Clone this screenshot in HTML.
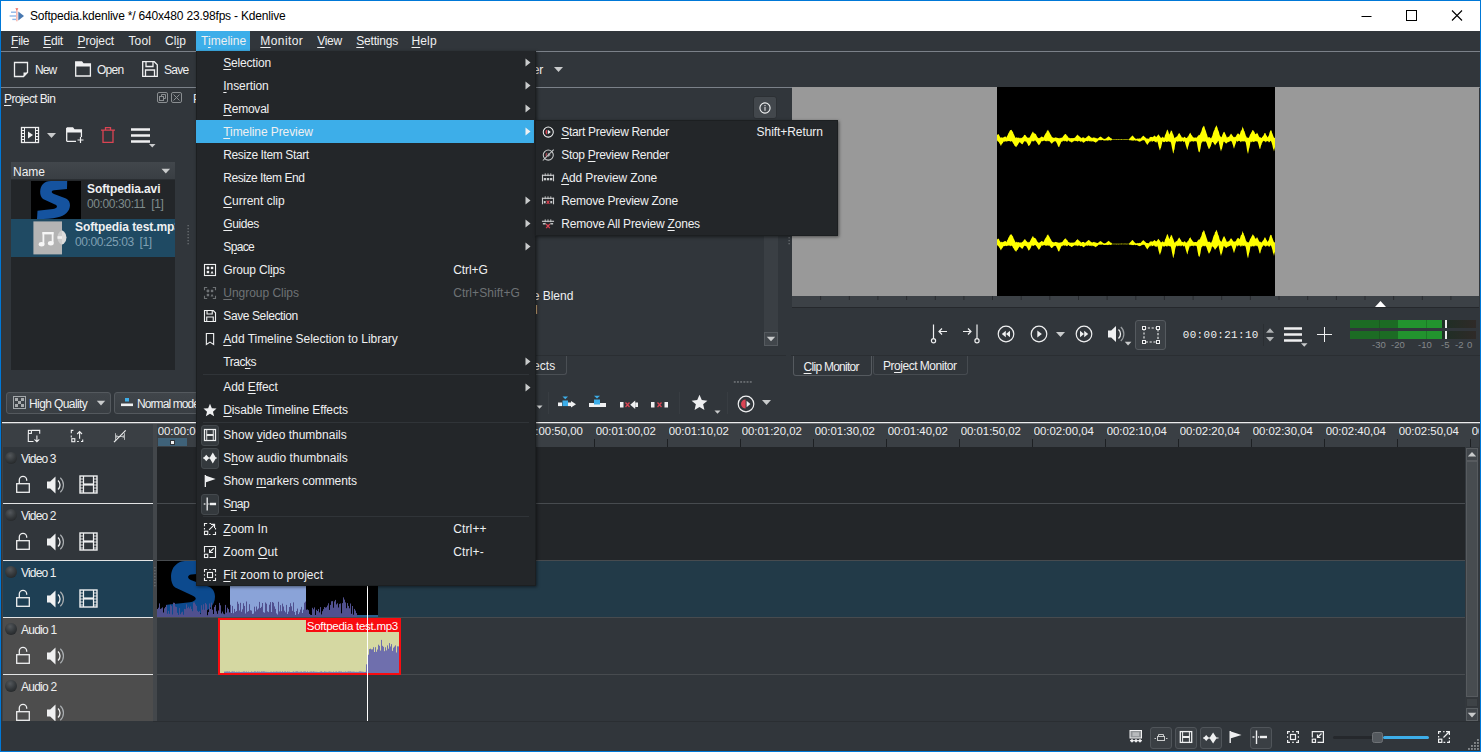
<!DOCTYPE html>
<html><head><meta charset="utf-8"><title>Kdenlive</title>
<style>
html,body{margin:0;padding:0;background:#31363b;overflow:hidden}
#w{position:relative;width:1481px;height:752px;overflow:hidden;background:#31363b;font-family:"Liberation Sans",sans-serif;font-size:12px;color:#eff0f1}
#w div,#w span,#w svg{position:absolute;box-sizing:border-box}
#w span{white-space:pre;line-height:1}
#w u{text-decoration:underline;text-underline-offset:1.5px;text-decoration-thickness:1px}
#w span.m{font-family:"Liberation Mono",monospace}
#w span.b{font-weight:bold}
</style></head><body><div id="w">
<div style="left:0px;top:0px;width:1481px;height:752px;background:#0078d7;"></div>
<div style="left:1px;top:1px;width:1479px;height:30px;background:#ffffff;"></div>
<div style="left:1px;top:31px;width:1479px;height:720px;background:#31363b;"></div>
<svg style="left:8px;top:7px;" width="18" height="18" viewBox="0 0 18 18"><path d="M10.300 4.500 L16 8.900 L10.300 13.400Z" fill="#4878b0"/>
<rect x="8.100" y="2" width="1.500" height="12.300" fill="#f7b5ad"/>
<path d="M7.300 1.200h3.100l-1.550 2.200z" fill="#ee6a5c"/>
<rect x="3" y="4.500" width="5" height="1.400" fill="#8fb7e8"/><rect x="1.600" y="8.300" width="6.400" height="1.400" fill="#8fb7e8"/><rect x="4.300" y="11.700" width="3.700" height="1.400" fill="#8fb7e8"/></svg>
<span style="left:30px;top:10.34px;font-size:12px;color:#000;letter-spacing:-0.19px">Softpedia.kdenlive */ 640x480 23.98fps - Kdenlive</span>
<svg style="left:1360px;top:5px;" width="110" height="22" viewBox="0 0 110 22"><path d="M1.5 11.5h10" stroke="#000" stroke-width="1"/>
<rect x="46.5" y="5.5" width="10" height="10" fill="none" stroke="#000" stroke-width="1"/>
<path d="M92 5.5l10 10M102 5.5l-10 10" stroke="#000" stroke-width="1.1"/></svg>
<div style="left:1px;top:51px;width:1479px;height:1px;background:#7b8189;"></div>
<div style="left:196px;top:31px;width:54px;height:20px;background:#3daee9;"></div>
<span style="left:11.1px;top:34.84px;font-size:12px;color:#eff0f1;letter-spacing:-0.309px;"><u>F</u>ile</span>
<span style="left:43.2px;top:34.84px;font-size:12px;color:#eff0f1;letter-spacing:-0.245px;"><u>E</u>dit</span>
<span style="left:77.5px;top:34.84px;font-size:12px;color:#eff0f1;letter-spacing:-0.121px;"><u>P</u>roject</span>
<span style="left:128.5px;top:34.84px;font-size:12px;color:#eff0f1;letter-spacing:0.122px;">Tool</span>
<span style="left:165px;top:34.84px;font-size:12px;color:#eff0f1;letter-spacing:0.082px;">Cl<u>i</u>p</span>
<span style="left:201px;top:34.84px;font-size:12px;color:#eff0f1;letter-spacing:0.038px;">T<u>i</u>meline</span>
<span style="left:260.3px;top:34.84px;font-size:12px;color:#eff0f1;letter-spacing:0.412px;"><u>M</u>onitor</span>
<span style="left:317.2px;top:34.84px;font-size:12px;color:#eff0f1;letter-spacing:-0.273px;"><u>V</u>iew</span>
<span style="left:356.3px;top:34.84px;font-size:12px;color:#eff0f1;letter-spacing:-0.207px;"><u>S</u>ettings</span>
<span style="left:411.5px;top:34.84px;font-size:12px;color:#eff0f1;letter-spacing:0.130px;"><u>H</u>elp</span>
<div style="left:1px;top:87px;width:1479px;height:1px;background:#7b8189;"></div>
<svg style="left:12px;top:60.5px;" width="18" height="18" viewBox="0 0 18 18"><path d="M2.5 1.5h13v10l-4 4h-9z" fill="none" stroke="#eff0f1" stroke-width="1.3"/><path d="M15.5 11.5h-4v4z" fill="#eff0f1"/></svg>
<span style="left:35px;top:64.44px;font-size:12px;color:#eff0f1;letter-spacing:-0.902px;">New</span>
<svg style="left:74px;top:60px;" width="18" height="18" viewBox="0 0 18 18"><path d="M1.7 2h6l1.5 2h7.2v12H1.7z" fill="none" stroke="#eff0f1" stroke-width="1.3"/><path d="M1.7 2h6l1.5 2h7.2v2.6H1.7z" fill="#eff0f1"/></svg>
<span style="left:97px;top:64.44px;font-size:12px;color:#eff0f1;letter-spacing:-0.764px;">Open</span>
<svg style="left:141px;top:60px;" width="18" height="18" viewBox="0 0 18 18"><path d="M1.7 1.7h11.6l3 3v11.6H1.7z" fill="none" stroke="#eff0f1" stroke-width="1.3"/><path d="M5 2v4.5h7V2M4.5 16v-6h9v6" fill="none" stroke="#eff0f1" stroke-width="1.3"/></svg>
<span style="left:164px;top:64.44px;font-size:12px;color:#eff0f1;letter-spacing:-0.763px;">Save</span>
<span style="left:526px;top:63.84px;font-size:12px;color:#eff0f1;">der</span>
<svg style="left:553px;top:66px;" width="12" height="8" viewBox="0 0 12 8"><path d="M1 1h9l-4.5 5z" fill="#c9cbcc"/></svg>
<span style="left:4px;top:92.84px;font-size:12px;color:#eff0f1;letter-spacing:-0.621px;"><u>P</u>roject Bin</span>
<svg style="left:156px;top:91px;" width="28" height="14" viewBox="0 0 28 14"><g fill="none" stroke="#8a8e91" stroke-width="1">
<rect x="1.5" y="1.5" width="10" height="10" rx="1.5"/><rect x="3.5" y="5.5" width="4" height="4"/><path d="M5.5 5.5v-2h4v4h-2"/>
<rect x="15.5" y="1.5" width="10" height="10" rx="1.5"/><path d="M17.5 3.5l6 6M23.5 3.5l-6 6"/></g></svg>
<span style="left:193px;top:92.84px;font-size:12px;color:#eff0f1;">P</span>
<svg style="left:20px;top:126px;" width="20" height="18" viewBox="0 0 20 18"><rect x="1.5" y="1.5" width="17" height="15" fill="none" stroke="#eff0f1" stroke-width="1.3"/>
<path d="M4.5 1.5v15M15.5 1.5v15" stroke="#eff0f1" stroke-width="1"/>
<path d="M2 4.5h2M2 7.5h2M2 10.5h2M2 13.5h2M16 4.5h2M16 7.5h2M16 10.5h2M16 13.5h2" stroke="#eff0f1" stroke-width="1"/>
<path d="M8 5.5l5 3.5-5 3.5z" fill="#eff0f1"/></svg>
<svg style="left:46px;top:132px;" width="12" height="8" viewBox="0 0 12 8"><path d="M1 1h9l-4.5 5z" fill="#c9cbcc"/></svg>
<svg style="left:65px;top:126px;" width="22" height="18" viewBox="0 0 22 18"><path d="M1.7 2h6l1.5 2h7.2v7M11 15.3H1.7z M1.7 2v13.3" fill="none" stroke="#eff0f1" stroke-width="1.3"/>
<path d="M1.7 2h6l1.5 2h7.2v2.6H1.7z" fill="#eff0f1"/><path d="M15.5 11v6M12.5 14h6" stroke="#eff0f1" stroke-width="1.2"/></svg>
<svg style="left:100px;top:126px;" width="16" height="18" viewBox="0 0 16 18"><g fill="none" stroke="#da4453" stroke-width="1.3"><path d="M1 4.2h14M5.5 4V1.7h5V4M3 4.5v11.8h10V4.5"/></g></svg>
<svg style="left:130px;top:127px;" width="28" height="22" viewBox="0 0 28 22"><path d="M1 2.5h19M1 8.5h19M1 14.5h19" stroke="#eff0f1" stroke-width="2.4"/><path d="M19 17h6.5l-3.25 3.6z" fill="#c9cbcc"/></svg>
<div style="left:11px;top:162px;width:164px;height:208px;background:#232629;"></div>
<div style="left:11px;top:162px;width:164px;height:18px;background:linear-gradient(#42474c,#393e43);border-bottom:1px solid #2a2e32"></div>
<span style="left:13px;top:165.84px;font-size:12px;color:#eff0f1;">Name</span>
<svg style="left:161px;top:168px;" width="10" height="7" viewBox="0 0 10 7"><path d="M0.5 0.8h8.6l-4.3 4.6z" fill="#c9cbcc"/></svg>
<div style="left:31px;top:181px;width:50px;height:38px;background:#000;overflow:hidden"><svg style="left:0;top:0" width="50" height="38" viewBox="0 0 50 38"><path d="M36.200 0 L36 8 L23 9.200 C20 9.600 20 12 23 13 L35 17.500 C40.500 20 40 28 35.500 32 C31 36 24 38 6 38 L6.500 29.700 L22 28 C26 27.500 27.500 25 24 23.500 L12 18 C8 15 8.500 6 12 3 C14 1 16 0 20 0 Z" fill="#15539f"/></svg></div>
<span class="b" style="left:87px;top:182.84px;font-size:12px;color:#eff0f1;letter-spacing:-0.1px">Softpedia.avi</span>
<span style="left:87px;top:197.84px;font-size:12px;color:#7f8c8d;letter-spacing:-0.382px;">00:00:30:11  [1]</span>
<div style="left:11px;top:219px;width:164px;height:38px;background:#1f4a63;"></div>
<div style="left:33px;top:221px;width:34px;height:34px;"><svg style="left:0;top:0" width="34" height="34" viewBox="0 0 34 34"><circle cx="25.500" cy="16.500" r="8" fill="#dcdcdc"/><rect x="0.400" y="0.400" width="28.600" height="33" fill="#b4b4b4"/><path d="M29 9.300a8 8 0 0 0 0 14.400z" fill="#cdcdcd"/><rect x="24.500" y="15.200" width="4.500" height="2.600" fill="#f0f0f0"/><g fill="#f6f6f6"><rect x="9.500" y="11" width="1.800" height="12"/><rect x="18.700" y="11" width="1.800" height="11"/><rect x="9.500" y="11" width="11" height="2.400"/><ellipse cx="8.600" cy="23.300" rx="2.900" ry="2.200"/><ellipse cx="17.800" cy="22.300" rx="2.900" ry="2.200"/></g></svg></div>
<div style="left:75px;top:219px;width:100px;height:38px;overflow:hidden"><span class="b" style="left:0;top:2.200px;font-size:12px;color:#eff0f1;letter-spacing:-0.081px">Softpedia test.mp3</span><span style="left:0;top:17.200px;font-size:12px;color:#7fa0b3;letter-spacing:-0.419px">00:00:25:03  [1]</span></div>
<svg style="left:186px;top:224px;" width="5" height="24" viewBox="0 0 5 24"><g fill="#6c7074"><rect x="1.5" y="1" width="1.3" height="1.3"/><rect x="1.5" y="4" width="1.3" height="1.3"/><rect x="1.5" y="7" width="1.3" height="1.3"/><rect x="1.5" y="10" width="1.3" height="1.3"/><rect x="1.5" y="13" width="1.3" height="1.3"/><rect x="1.5" y="16" width="1.3" height="1.3"/><rect x="1.5" y="19" width="1.3" height="1.3"/></g></svg>
<div style="left:753px;top:96px;width:24px;height:23px;background:#42474c;border:1px solid #2c3034;border-radius:3px"></div>
<svg style="left:756.5px;top:99.5px;" width="16" height="16" viewBox="0 0 16 16"><circle cx="8" cy="8" r="5.100" fill="none" stroke="#eff0f1" stroke-width="1.100"/><rect x="7.500" y="6.900" width="1" height="3.900" fill="#eff0f1"/><rect x="7.500" y="5" width="1" height="1.100" fill="#eff0f1"/></svg>
<div style="left:764px;top:120px;width:14px;height:226px;background:#3a3f44;"></div>
<div style="left:764px;top:332px;width:14px;height:14px;background:#41464b;border:1px solid #555a5f"></div>
<svg style="left:766px;top:336px;" width="10" height="7" viewBox="0 0 10 7"><path d="M0.8 0.8h8.4l-4.2 4.4z" fill="#c9cbcc"/></svg>
<span style="left:524px;top:289.84px;font-size:12px;color:#eff0f1;">ive Blend</span>
<span style="left:524px;top:303.84px;font-size:12px;color:#eff0f1;">nd</span>
<div style="left:480px;top:355px;width:306px;height:1px;background:#2a2e32;"></div>
<div style="left:480px;top:356px;width:87px;height:19px;background:#31363b;border:1px solid #4a4f54;border-top:none;border-radius:0 0 3px 3px"></div>
<span style="left:518.5px;top:359.84px;font-size:12px;color:#eff0f1;letter-spacing:0.034px;">Effects</span>
<svg style="left:787px;top:236px;" width="5" height="12" viewBox="0 0 5 12"><g fill="#6c7074"><rect x="1.5" y="1" width="1.3" height="1.3"/><rect x="1.5" y="4" width="1.3" height="1.3"/><rect x="1.5" y="7" width="1.3" height="1.3"/></g></svg>
<div style="left:792px;top:87px;width:687px;height:209px;background:#999999;"></div>
<div style="left:997px;top:87px;width:278px;height:209px;background:#000000;"></div>
<svg style="left:997px;top:87px;" width="278" height="209" viewBox="0 0 278 209"><path d="M0.0 48.0 L0.5 47.7 L1.0 46.9 L1.5 47.3 L2.0 47.8 L2.5 49.1 L3.0 49.8 L3.5 50.4 L4.0 51.0 L4.5 50.3 L5.0 50.2 L5.5 50.8 L6.0 50.7 L6.5 50.3 L7.0 49.9 L7.5 49.8 L8.0 49.6 L8.5 49.6 L9.0 50.1 L9.5 50.7 L10.0 49.1 L10.5 48.5 L11.0 47.3 L11.5 45.9 L12.0 45.5 L12.5 44.3 L13.0 43.6 L13.5 43.1 L14.0 42.9 L14.5 42.7 L15.0 43.8 L15.5 44.4 L16.0 45.0 L16.5 46.7 L17.0 47.4 L17.5 48.8 L18.0 49.7 L18.5 50.8 L19.0 51.1 L19.5 50.3 L20.0 50.3 L20.5 50.8 L21.0 51.3 L21.5 50.4 L22.0 50.4 L22.5 51.0 L23.0 51.6 L23.5 50.9 L24.0 50.5 L24.5 51.2 L25.0 50.7 L25.5 50.2 L26.0 49.9 L26.5 49.3 L27.0 48.3 L27.5 47.7 L28.0 47.9 L28.5 48.1 L29.0 49.2 L29.5 49.6 L30.0 50.2 L30.5 51.1 L31.0 50.1 L31.5 51.1 L32.0 50.7 L32.5 50.6 L33.0 49.7 L33.5 48.7 L34.0 47.8 L34.5 46.7 L35.0 45.9 L35.5 44.9 L36.0 44.6 L36.5 45.4 L37.0 46.4 L37.5 46.2 L38.0 46.4 L38.5 47.1 L39.0 47.3 L39.5 48.5 L40.0 49.5 L40.5 50.3 L41.0 50.8 L41.5 51.2 L42.0 51.0 L42.5 51.3 L43.0 50.5 L43.5 50.4 L44.0 50.1 L44.5 49.6 L45.0 49.6 L45.5 50.0 L46.0 50.2 L46.5 50.4 L47.0 49.4 L47.5 48.2 L48.0 47.4 L48.5 46.5 L49.0 45.9 L49.5 45.3 L50.0 43.5 L50.5 43.7 L51.0 42.6 L51.5 44.1 L52.0 44.4 L52.5 45.4 L53.0 46.4 L53.5 47.4 L54.0 48.1 L54.5 49.3 L55.0 50.1 L55.5 50.6 L56.0 50.2 L56.5 50.9 L57.0 50.8 L57.5 50.9 L58.0 50.2 L58.5 50.4 L59.0 50.5 L59.5 50.5 L60.0 51.0 L60.5 50.8 L61.0 51.1 L61.5 51.1 L62.0 51.5 L62.5 51.3 L63.0 50.4 L63.5 51.0 L64.0 51.3 L64.5 50.4 L65.0 50.8 L65.5 50.3 L66.0 49.4 L66.5 48.8 L67.0 48.2 L67.5 47.6 L68.0 47.3 L68.5 46.9 L69.0 47.0 L69.5 48.3 L70.0 48.5 L70.5 49.1 L71.0 50.0 L71.5 50.8 L72.0 50.6 L72.5 51.1 L73.0 51.3 L73.5 51.0 L74.0 51.6 L74.5 50.9 L75.0 51.0 L75.5 51.3 L76.0 50.9 L76.5 51.0 L77.0 51.3 L77.5 50.7 L78.0 50.5 L78.5 49.9 L79.0 49.2 L79.5 48.4 L80.0 48.5 L80.5 47.6 L81.0 47.9 L81.5 48.7 L82.0 49.1 L82.5 49.5 L83.0 50.1 L83.5 50.3 L84.0 51.0 L84.5 51.2 L85.0 50.5 L85.5 50.5 L86.0 50.6 L86.5 50.6 L87.0 50.3 L87.5 51.5 L88.0 50.7 L88.5 51.2 L89.0 50.7 L89.5 50.2 L90.0 49.7 L90.5 49.6 L91.0 48.7 L91.5 48.6 L92.0 48.7 L92.5 49.1 L93.0 49.5 L93.5 50.0 L94.0 50.5 L94.5 50.5 L95.0 51.3 L95.5 51.0 L96.0 50.2 L96.5 50.7 L97.0 50.2 L97.5 50.4 L98.0 51.2 L98.5 50.5 L99.0 51.5 L99.5 51.1 L100.0 51.4 L100.5 51.4 L101.0 51.3 L101.5 51.1 L102.0 50.5 L102.5 50.1 L103.0 50.0 L103.5 49.6 L104.0 49.7 L104.5 50.2 L105.0 50.5 L105.5 50.9 L106.0 51.4 L106.5 51.6 L107.0 51.9 L107.5 51.7 L108.0 51.9 L108.5 51.4 L109.0 51.4 L109.5 51.1 L110.0 50.6 L110.5 50.2 L111.0 49.8 L111.5 49.2 L112.0 49.7 L112.5 49.9 L113.0 50.5 L113.5 51.0 L114.0 51.3 L114.5 51.3 L115.0 52.3 L115.5 52.3 L116.0 52.2 L116.5 52.2 L117.0 52.3 L117.5 52.2 L118.0 52.3 L118.5 52.2 L119.0 52.2 L119.5 52.2 L120.0 52.3 L120.5 52.3 L121.0 52.3 L121.5 52.2 L122.0 52.3 L122.5 52.3 L123.0 52.2 L123.5 52.3 L124.0 52.2 L124.5 52.1 L125.0 52.3 L125.5 52.2 L126.0 52.2 L126.5 52.2 L127.0 52.3 L127.5 52.3 L128.0 52.1 L128.5 52.3 L129.0 52.3 L129.5 52.3 L130.0 52.2 L130.5 52.3 L131.0 52.2 L131.5 52.3 L132.0 52.2 L132.5 51.4 L133.0 51.1 L133.5 50.6 L134.0 50.1 L134.5 49.6 L135.0 48.8 L135.5 48.5 L136.0 49.0 L136.5 49.6 L137.0 50.2 L137.5 50.7 L138.0 51.2 L138.5 51.6 L139.0 51.9 L139.5 52.0 L140.0 51.3 L140.5 51.5 L141.0 51.9 L141.5 51.6 L142.0 51.6 L142.5 51.2 L143.0 51.8 L143.5 51.5 L144.0 50.9 L144.5 50.5 L145.0 49.7 L145.5 49.4 L146.0 48.8 L146.5 48.8 L147.0 49.2 L147.5 49.7 L148.0 50.2 L148.5 50.6 L149.0 51.2 L149.5 51.6 L150.0 51.6 L150.5 51.4 L151.0 51.7 L151.5 51.4 L152.0 51.9 L152.5 50.4 L153.0 50.3 L153.5 49.9 L154.0 49.7 L154.5 50.0 L155.0 50.0 L155.5 50.3 L156.0 49.8 L156.5 49.4 L157.0 49.0 L157.5 48.6 L158.0 48.8 L158.5 49.8 L159.0 49.6 L159.5 50.0 L160.0 49.2 L160.5 48.4 L161.0 47.8 L161.5 47.3 L162.0 48.2 L162.5 48.7 L163.0 49.6 L163.5 50.2 L164.0 51.0 L164.5 50.4 L165.0 50.7 L165.5 49.6 L166.0 50.0 L166.5 50.4 L167.0 51.1 L167.5 50.2 L168.0 48.0 L168.5 47.3 L169.0 46.0 L169.5 44.6 L170.0 42.9 L170.5 42.5 L171.0 43.8 L171.5 45.0 L172.0 46.9 L172.5 47.5 L173.0 45.8 L173.5 45.3 L174.0 43.0 L174.5 43.9 L175.0 43.9 L175.5 46.0 L176.0 47.0 L176.5 48.1 L177.0 49.8 L177.5 51.1 L178.0 51.3 L178.5 50.0 L179.0 50.2 L179.5 49.6 L180.0 49.6 L180.5 48.7 L181.0 47.6 L181.5 47.1 L182.0 46.1 L182.5 46.3 L183.0 47.2 L183.5 47.9 L184.0 48.7 L184.5 49.7 L185.0 50.7 L185.5 50.2 L186.0 50.5 L186.5 51.0 L187.0 49.7 L187.5 50.0 L188.0 49.7 L188.5 50.8 L189.0 51.1 L189.5 50.8 L190.0 51.3 L190.5 49.5 L191.0 49.7 L191.5 48.8 L192.0 47.7 L192.5 46.6 L193.0 46.5 L193.5 45.6 L194.0 47.3 L194.5 48.0 L195.0 48.5 L195.5 49.5 L196.0 50.1 L196.5 50.3 L197.0 51.1 L197.5 50.4 L198.0 50.5 L198.5 50.5 L199.0 50.5 L199.5 50.7 L200.0 50.3 L200.5 49.5 L201.0 48.8 L201.5 48.6 L202.0 47.5 L202.5 48.2 L203.0 47.5 L203.5 46.1 L204.0 45.2 L204.5 44.0 L205.0 41.9 L205.5 40.2 L206.0 40.4 L206.5 38.8 L207.0 39.1 L207.5 39.8 L208.0 42.0 L208.5 43.1 L209.0 44.5 L209.5 46.2 L210.0 47.4 L210.5 49.2 L211.0 50.7 L211.5 50.1 L212.0 50.4 L212.5 49.9 L213.0 50.5 L213.5 50.9 L214.0 51.4 L214.5 50.5 L215.0 49.6 L215.5 48.3 L216.0 46.2 L216.5 44.8 L217.0 43.6 L217.5 42.9 L218.0 40.6 L218.5 40.4 L219.0 39.1 L219.5 38.2 L220.0 39.7 L220.5 40.7 L221.0 43.1 L221.5 43.8 L222.0 45.2 L222.5 47.5 L223.0 48.7 L223.5 49.6 L224.0 50.0 L224.5 50.2 L225.0 48.9 L225.5 47.5 L226.0 46.5 L226.5 45.3 L227.0 44.7 L227.5 45.1 L228.0 46.3 L228.5 47.3 L229.0 48.3 L229.5 49.5 L230.0 50.8 L230.5 50.3 L231.0 49.5 L231.5 50.1 L232.0 49.7 L232.5 49.1 L233.0 47.9 L233.5 47.4 L234.0 46.4 L234.5 47.2 L235.0 47.7 L235.5 48.8 L236.0 49.3 L236.5 49.9 L237.0 50.3 L237.5 50.3 L238.0 49.5 L238.5 50.1 L239.0 49.4 L239.5 48.1 L240.0 47.6 L240.5 46.7 L241.0 46.2 L241.5 46.8 L242.0 47.0 L242.5 47.9 L243.0 46.8 L243.5 45.0 L244.0 43.5 L244.5 43.4 L245.0 42.0 L245.5 39.3 L246.0 41.2 L246.5 41.5 L247.0 43.8 L247.5 44.2 L248.0 45.9 L248.5 47.6 L249.0 49.3 L249.5 49.6 L250.0 51.3 L250.5 50.2 L251.0 50.7 L251.5 51.0 L252.0 50.2 L252.5 49.3 L253.0 47.8 L253.5 47.0 L254.0 46.2 L254.5 45.1 L255.0 44.4 L255.5 43.0 L256.0 43.1 L256.5 43.7 L257.0 44.5 L257.5 44.9 L258.0 46.8 L258.5 47.0 L259.0 47.3 L259.5 46.4 L260.0 45.6 L260.5 46.5 L261.0 47.2 L261.5 48.4 L262.0 49.4 L262.5 50.2 L263.0 50.2 L263.5 50.2 L264.0 51.0 L264.5 50.9 L265.0 50.3 L265.5 49.8 L266.0 49.1 L266.5 48.4 L267.0 47.4 L267.5 45.9 L268.0 46.1 L268.5 46.2 L269.0 47.8 L269.5 48.6 L270.0 49.3 L270.5 50.4 L271.0 49.7 L271.5 49.1 L272.0 47.9 L272.5 45.8 L273.0 44.6 L273.5 43.2 L274.0 43.4 L274.5 43.6 L275.0 45.8 L275.5 46.7 L276.0 48.2 L276.5 49.4 L277.0 50.8 L277.5 50.8 L278.0 51.1 L278.5 50.4 L278.5 58.0 L278.0 60.0 L277.5 61.9 L277.0 64.5 L276.5 62.2 L276.0 61.6 L275.5 58.7 L275.0 57.0 L274.5 55.2 L274.0 54.2 L273.5 53.7 L273.0 54.4 L272.5 55.1 L272.0 55.5 L271.5 54.8 L271.0 54.1 L270.5 54.0 L270.0 54.8 L269.5 54.0 L269.0 55.3 L268.5 55.2 L268.0 54.0 L267.5 54.3 L267.0 54.5 L266.5 53.8 L266.0 53.9 L265.5 55.4 L265.0 55.4 L264.5 57.7 L264.0 58.6 L263.5 61.0 L263.0 62.3 L262.5 61.4 L262.0 59.6 L261.5 57.5 L261.0 55.8 L260.5 54.8 L260.0 54.0 L259.5 54.2 L259.0 55.0 L258.5 53.9 L258.0 54.1 L257.5 54.8 L257.0 55.0 L256.5 55.1 L256.0 54.4 L255.5 54.3 L255.0 55.4 L254.5 55.1 L254.0 54.5 L253.5 54.9 L253.0 57.7 L252.5 60.6 L252.0 62.0 L251.5 64.8 L251.0 67.0 L250.5 65.2 L250.0 63.3 L249.5 59.8 L249.0 57.1 L248.5 54.5 L248.0 55.2 L247.5 53.7 L247.0 54.4 L246.5 54.4 L246.0 53.9 L245.5 54.0 L245.0 55.4 L244.5 53.8 L244.0 54.9 L243.5 55.2 L243.0 53.7 L242.5 54.3 L242.0 53.7 L241.5 54.1 L241.0 54.3 L240.5 55.2 L240.0 53.7 L239.5 54.0 L239.0 55.7 L238.5 57.0 L238.0 58.5 L237.5 60.0 L237.0 61.7 L236.5 60.3 L236.0 58.2 L235.5 56.9 L235.0 55.3 L234.5 54.5 L234.0 53.8 L233.5 53.9 L233.0 54.5 L232.5 54.6 L232.0 54.7 L231.5 55.2 L231.0 54.8 L230.5 55.4 L230.0 55.7 L229.5 56.4 L229.0 56.5 L228.5 56.0 L228.0 55.6 L227.5 55.0 L227.0 54.6 L226.5 55.0 L226.0 57.5 L225.5 59.6 L225.0 61.7 L224.5 62.6 L224.0 64.4 L223.5 62.8 L223.0 61.1 L222.5 58.5 L222.0 56.4 L221.5 53.8 L221.0 54.2 L220.5 54.9 L220.0 55.9 L219.5 56.3 L219.0 57.1 L218.5 57.8 L218.0 58.6 L217.5 57.3 L217.0 56.8 L216.5 55.8 L216.0 55.3 L215.5 55.1 L215.0 54.9 L214.5 56.8 L214.0 58.6 L213.5 59.7 L213.0 60.6 L212.5 61.6 L212.0 62.3 L211.5 61.5 L211.0 60.1 L210.5 58.9 L210.0 57.2 L209.5 55.8 L209.0 55.1 L208.5 54.6 L208.0 53.9 L207.5 55.1 L207.0 54.6 L206.5 54.7 L206.0 54.0 L205.5 54.8 L205.0 55.4 L204.5 55.7 L204.0 58.2 L203.5 61.5 L203.0 63.6 L202.5 65.4 L202.0 65.1 L201.5 64.5 L201.0 62.0 L200.5 59.6 L200.0 56.3 L199.5 54.3 L199.0 54.6 L198.5 53.9 L198.0 54.4 L197.5 54.3 L197.0 53.8 L196.5 55.3 L196.0 54.1 L195.5 54.4 L195.0 54.2 L194.5 54.2 L194.0 54.4 L193.5 55.3 L193.0 54.1 L192.5 55.4 L192.0 57.1 L191.5 58.7 L191.0 60.3 L190.5 63.0 L190.0 62.2 L189.5 60.5 L189.0 59.0 L188.5 57.2 L188.0 55.3 L187.5 53.9 L187.0 55.3 L186.5 54.8 L186.0 54.6 L185.5 53.8 L185.0 54.0 L184.5 55.0 L184.0 53.7 L183.5 55.3 L183.0 53.8 L182.5 54.7 L182.0 54.0 L181.5 54.8 L181.0 54.1 L180.5 54.8 L180.0 55.0 L179.5 53.8 L179.0 54.9 L178.5 56.2 L178.0 58.6 L177.5 62.2 L177.0 63.4 L176.5 66.4 L176.0 66.1 L175.5 63.2 L175.0 61.0 L174.5 58.2 L174.0 55.8 L173.5 55.1 L173.0 54.6 L172.5 55.1 L172.0 54.3 L171.5 54.7 L171.0 53.8 L170.5 55.1 L170.0 54.9 L169.5 55.1 L169.0 54.6 L168.5 54.2 L168.0 54.8 L167.5 55.1 L167.0 55.3 L166.5 54.8 L166.0 55.0 L165.5 53.9 L165.0 56.4 L164.5 58.6 L164.0 60.7 L163.5 61.5 L163.0 63.5 L162.5 62.6 L162.0 60.7 L161.5 59.1 L161.0 56.5 L160.5 55.0 L160.0 54.0 L159.5 55.4 L159.0 55.4 L158.5 54.7 L158.0 55.3 L157.5 54.3 L157.0 54.1 L156.5 54.0 L156.0 54.2 L155.5 54.7 L155.0 54.5 L154.5 53.6 L154.0 55.5 L153.5 54.2 L153.0 54.0 L152.5 54.9 L152.0 55.6 L151.5 56.3 L151.0 56.7 L150.5 57.9 L150.0 57.5 L149.5 56.8 L149.0 55.9 L148.5 55.3 L148.0 54.3 L147.5 53.6 L147.0 53.2 L146.5 53.3 L146.0 53.3 L145.5 53.2 L145.0 53.8 L144.5 53.7 L144.0 53.9 L143.5 54.4 L143.0 54.6 L142.5 54.7 L142.0 54.6 L141.5 54.3 L141.0 54.2 L140.5 53.7 L140.0 53.4 L139.5 53.4 L139.0 53.6 L138.5 53.8 L138.0 53.5 L137.5 53.2 L137.0 53.3 L136.5 53.7 L136.0 53.4 L135.5 53.6 L135.0 53.7 L134.5 53.4 L134.0 53.1 L133.5 53.2 L133.0 53.5 L132.5 53.2 L132.0 52.7 L131.5 52.7 L131.0 52.6 L130.5 52.7 L130.0 52.9 L129.5 52.7 L129.0 52.7 L128.5 52.7 L128.0 52.8 L127.5 52.7 L127.0 52.7 L126.5 52.8 L126.0 52.8 L125.5 52.6 L125.0 52.9 L124.5 52.7 L124.0 52.8 L123.5 52.8 L123.0 52.7 L122.5 52.7 L122.0 52.7 L121.5 52.9 L121.0 52.7 L120.5 52.7 L120.0 52.7 L119.5 52.9 L119.0 52.7 L118.5 52.7 L118.0 52.7 L117.5 52.7 L117.0 52.7 L116.5 52.7 L116.0 52.8 L115.5 52.7 L115.0 52.7 L114.5 53.2 L114.0 53.2 L113.5 53.6 L113.0 53.6 L112.5 53.0 L112.0 53.3 L111.5 53.4 L111.0 53.3 L110.5 53.7 L110.0 53.2 L109.5 53.5 L109.0 53.3 L108.5 53.4 L108.0 53.4 L107.5 53.4 L107.0 53.5 L106.5 53.6 L106.0 53.0 L105.5 53.1 L105.0 53.0 L104.5 53.1 L104.0 53.7 L103.5 53.0 L103.0 53.0 L102.5 53.2 L102.0 53.2 L101.5 53.3 L101.0 53.7 L100.5 54.5 L100.0 54.5 L99.5 55.0 L99.0 55.5 L98.5 55.8 L98.0 55.1 L97.5 55.1 L97.0 54.8 L96.5 54.2 L96.0 54.7 L95.5 53.7 L95.0 54.9 L94.5 54.4 L94.0 53.5 L93.5 54.5 L93.0 54.6 L92.5 54.1 L92.0 54.5 L91.5 53.7 L91.0 53.7 L90.5 54.6 L90.0 54.2 L89.5 54.0 L89.0 53.9 L88.5 54.3 L88.0 54.8 L87.5 55.0 L87.0 55.5 L86.5 55.7 L86.0 55.4 L85.5 55.0 L85.0 54.3 L84.5 54.5 L84.0 54.6 L83.5 54.8 L83.0 54.5 L82.5 53.9 L82.0 53.8 L81.5 53.9 L81.0 54.6 L80.5 54.8 L80.0 53.7 L79.5 54.3 L79.0 53.9 L78.5 53.8 L78.0 54.6 L77.5 53.6 L77.0 54.1 L76.5 54.4 L76.0 54.6 L75.5 55.0 L75.0 55.4 L74.5 55.5 L74.0 55.1 L73.5 54.7 L73.0 54.5 L72.5 54.5 L72.0 54.0 L71.5 53.6 L71.0 53.6 L70.5 54.7 L70.0 54.5 L69.5 54.7 L69.0 53.9 L68.5 53.8 L68.0 54.6 L67.5 54.2 L67.0 53.5 L66.5 54.2 L66.0 53.4 L65.5 54.7 L65.0 54.4 L64.5 54.8 L64.0 55.6 L63.5 57.0 L63.0 57.7 L62.5 59.2 L62.0 60.2 L61.5 59.7 L61.0 59.3 L60.5 57.8 L60.0 56.6 L59.5 55.7 L59.0 54.6 L58.5 54.4 L58.0 53.9 L57.5 54.4 L57.0 54.4 L56.5 55.0 L56.0 55.3 L55.5 56.1 L55.0 56.6 L54.5 56.4 L54.0 56.2 L53.5 55.2 L53.0 54.9 L52.5 54.2 L52.0 53.8 L51.5 54.5 L51.0 53.8 L50.5 53.7 L50.0 54.7 L49.5 53.8 L49.0 54.5 L48.5 54.1 L48.0 54.1 L47.5 53.6 L47.0 53.7 L46.5 53.7 L46.0 54.0 L45.5 54.4 L45.0 53.7 L44.5 54.3 L44.0 55.3 L43.5 56.1 L43.0 57.0 L42.5 57.5 L42.0 58.3 L41.5 58.0 L41.0 57.1 L40.5 56.5 L40.0 55.6 L39.5 54.7 L39.0 54.4 L38.5 53.4 L38.0 53.5 L37.5 53.4 L37.0 54.5 L36.5 54.4 L36.0 53.8 L35.5 54.8 L35.0 53.5 L34.5 54.5 L34.0 55.8 L33.5 56.7 L33.0 57.7 L32.5 58.3 L32.0 59.1 L31.5 59.0 L31.0 58.0 L30.5 56.8 L30.0 55.9 L29.5 55.2 L29.0 54.3 L28.5 54.8 L28.0 54.2 L27.5 54.2 L27.0 54.8 L26.5 55.6 L26.0 56.4 L25.5 57.2 L25.0 57.2 L24.5 56.8 L24.0 56.5 L23.5 55.7 L23.0 55.4 L22.5 54.9 L22.0 55.9 L21.5 56.6 L21.0 57.6 L20.5 58.5 L20.0 58.6 L19.5 59.8 L19.0 60.2 L18.5 59.4 L18.0 58.9 L17.5 58.7 L17.0 57.6 L16.5 56.8 L16.0 56.2 L15.5 55.1 L15.0 54.4 L14.5 54.3 L14.0 54.0 L13.5 54.9 L13.0 54.0 L12.5 54.2 L12.0 54.1 L11.5 53.9 L11.0 54.3 L10.5 54.3 L10.0 54.2 L9.5 54.5 L9.0 54.7 L8.5 54.0 L8.0 54.7 L7.5 54.6 L7.0 54.8 L6.5 54.4 L6.0 55.7 L5.5 56.3 L5.0 56.9 L4.5 57.6 L4.0 59.0 L3.5 58.2 L3.0 57.1 L2.5 56.4 L2.0 55.6 L1.5 54.5 L1.0 54.9 L0.5 53.4 L0.0 54.0Z" fill="#ffff00"/><path d="M0.0 152.5 L0.5 152.2 L1.0 151.4 L1.5 151.8 L2.0 152.3 L2.5 153.6 L3.0 154.3 L3.5 154.9 L4.0 155.5 L4.5 154.8 L5.0 154.7 L5.5 155.3 L6.0 155.2 L6.5 154.8 L7.0 154.4 L7.5 154.3 L8.0 154.1 L8.5 154.1 L9.0 154.6 L9.5 155.2 L10.0 153.6 L10.5 153.0 L11.0 151.8 L11.5 150.4 L12.0 150.0 L12.5 148.8 L13.0 148.1 L13.5 147.6 L14.0 147.4 L14.5 147.2 L15.0 148.3 L15.5 148.9 L16.0 149.5 L16.5 151.2 L17.0 151.9 L17.5 153.3 L18.0 154.2 L18.5 155.3 L19.0 155.6 L19.5 154.8 L20.0 154.8 L20.5 155.3 L21.0 155.8 L21.5 154.9 L22.0 154.9 L22.5 155.5 L23.0 156.1 L23.5 155.4 L24.0 155.0 L24.5 155.7 L25.0 155.2 L25.5 154.7 L26.0 154.4 L26.5 153.8 L27.0 152.8 L27.5 152.2 L28.0 152.4 L28.5 152.6 L29.0 153.7 L29.5 154.1 L30.0 154.7 L30.5 155.6 L31.0 154.6 L31.5 155.6 L32.0 155.2 L32.5 155.1 L33.0 154.2 L33.5 153.2 L34.0 152.3 L34.5 151.2 L35.0 150.4 L35.5 149.4 L36.0 149.1 L36.5 149.9 L37.0 150.9 L37.5 150.7 L38.0 150.9 L38.5 151.6 L39.0 151.8 L39.5 153.0 L40.0 154.0 L40.5 154.8 L41.0 155.3 L41.5 155.7 L42.0 155.5 L42.5 155.8 L43.0 155.0 L43.5 154.9 L44.0 154.6 L44.5 154.1 L45.0 154.1 L45.5 154.5 L46.0 154.7 L46.5 154.9 L47.0 153.9 L47.5 152.7 L48.0 151.9 L48.5 151.0 L49.0 150.4 L49.5 149.8 L50.0 148.0 L50.5 148.2 L51.0 147.1 L51.5 148.6 L52.0 148.9 L52.5 149.9 L53.0 150.9 L53.5 151.9 L54.0 152.6 L54.5 153.8 L55.0 154.6 L55.5 155.1 L56.0 154.7 L56.5 155.4 L57.0 155.3 L57.5 155.4 L58.0 154.7 L58.5 154.9 L59.0 155.0 L59.5 155.0 L60.0 155.5 L60.5 155.3 L61.0 155.6 L61.5 155.6 L62.0 156.0 L62.5 155.8 L63.0 154.9 L63.5 155.5 L64.0 155.8 L64.5 154.9 L65.0 155.3 L65.5 154.8 L66.0 153.9 L66.5 153.3 L67.0 152.7 L67.5 152.1 L68.0 151.8 L68.5 151.4 L69.0 151.5 L69.5 152.8 L70.0 153.0 L70.5 153.6 L71.0 154.5 L71.5 155.3 L72.0 155.1 L72.5 155.6 L73.0 155.8 L73.5 155.5 L74.0 156.1 L74.5 155.4 L75.0 155.5 L75.5 155.8 L76.0 155.4 L76.5 155.5 L77.0 155.8 L77.5 155.2 L78.0 155.0 L78.5 154.4 L79.0 153.7 L79.5 152.9 L80.0 153.0 L80.5 152.1 L81.0 152.4 L81.5 153.2 L82.0 153.6 L82.5 154.0 L83.0 154.6 L83.5 154.8 L84.0 155.5 L84.5 155.7 L85.0 155.0 L85.5 155.0 L86.0 155.1 L86.5 155.1 L87.0 154.8 L87.5 156.0 L88.0 155.2 L88.5 155.7 L89.0 155.2 L89.5 154.7 L90.0 154.2 L90.5 154.1 L91.0 153.2 L91.5 153.1 L92.0 153.2 L92.5 153.6 L93.0 154.0 L93.5 154.5 L94.0 155.0 L94.5 155.0 L95.0 155.8 L95.5 155.5 L96.0 154.7 L96.5 155.2 L97.0 154.7 L97.5 154.9 L98.0 155.7 L98.5 155.0 L99.0 156.0 L99.5 155.6 L100.0 155.9 L100.5 155.9 L101.0 155.8 L101.5 155.6 L102.0 155.0 L102.5 154.6 L103.0 154.5 L103.5 154.1 L104.0 154.2 L104.5 154.7 L105.0 155.0 L105.5 155.4 L106.0 155.9 L106.5 156.1 L107.0 156.4 L107.5 156.2 L108.0 156.4 L108.5 155.9 L109.0 155.9 L109.5 155.6 L110.0 155.1 L110.5 154.7 L111.0 154.3 L111.5 153.7 L112.0 154.2 L112.5 154.4 L113.0 155.0 L113.5 155.5 L114.0 155.8 L114.5 155.8 L115.0 156.8 L115.5 156.8 L116.0 156.7 L116.5 156.7 L117.0 156.8 L117.5 156.7 L118.0 156.8 L118.5 156.7 L119.0 156.7 L119.5 156.7 L120.0 156.8 L120.5 156.8 L121.0 156.8 L121.5 156.7 L122.0 156.8 L122.5 156.8 L123.0 156.7 L123.5 156.8 L124.0 156.7 L124.5 156.6 L125.0 156.8 L125.5 156.7 L126.0 156.7 L126.5 156.7 L127.0 156.8 L127.5 156.8 L128.0 156.6 L128.5 156.8 L129.0 156.8 L129.5 156.8 L130.0 156.7 L130.5 156.8 L131.0 156.7 L131.5 156.8 L132.0 156.7 L132.5 155.9 L133.0 155.6 L133.5 155.1 L134.0 154.6 L134.5 154.1 L135.0 153.3 L135.5 153.0 L136.0 153.5 L136.5 154.1 L137.0 154.7 L137.5 155.2 L138.0 155.7 L138.5 156.1 L139.0 156.4 L139.5 156.5 L140.0 155.8 L140.5 156.0 L141.0 156.4 L141.5 156.1 L142.0 156.1 L142.5 155.7 L143.0 156.3 L143.5 156.0 L144.0 155.4 L144.5 155.0 L145.0 154.2 L145.5 153.9 L146.0 153.3 L146.5 153.3 L147.0 153.7 L147.5 154.2 L148.0 154.7 L148.5 155.1 L149.0 155.7 L149.5 156.1 L150.0 156.1 L150.5 155.9 L151.0 156.2 L151.5 155.9 L152.0 156.4 L152.5 154.9 L153.0 154.8 L153.5 154.4 L154.0 154.2 L154.5 154.5 L155.0 154.5 L155.5 154.8 L156.0 154.3 L156.5 153.9 L157.0 153.5 L157.5 153.1 L158.0 153.3 L158.5 154.3 L159.0 154.1 L159.5 154.5 L160.0 153.7 L160.5 152.9 L161.0 152.3 L161.5 151.8 L162.0 152.7 L162.5 153.2 L163.0 154.1 L163.5 154.7 L164.0 155.5 L164.5 154.9 L165.0 155.2 L165.5 154.1 L166.0 154.5 L166.5 154.9 L167.0 155.6 L167.5 154.7 L168.0 152.5 L168.5 151.8 L169.0 150.5 L169.5 149.1 L170.0 147.4 L170.5 147.0 L171.0 148.3 L171.5 149.5 L172.0 151.4 L172.5 152.0 L173.0 150.3 L173.5 149.8 L174.0 147.5 L174.5 148.4 L175.0 148.4 L175.5 150.5 L176.0 151.5 L176.5 152.6 L177.0 154.3 L177.5 155.6 L178.0 155.8 L178.5 154.5 L179.0 154.7 L179.5 154.1 L180.0 154.1 L180.5 153.2 L181.0 152.1 L181.5 151.6 L182.0 150.6 L182.5 150.8 L183.0 151.7 L183.5 152.4 L184.0 153.2 L184.5 154.2 L185.0 155.2 L185.5 154.7 L186.0 155.0 L186.5 155.5 L187.0 154.2 L187.5 154.5 L188.0 154.2 L188.5 155.3 L189.0 155.6 L189.5 155.3 L190.0 155.8 L190.5 154.0 L191.0 154.2 L191.5 153.3 L192.0 152.2 L192.5 151.1 L193.0 151.0 L193.5 150.1 L194.0 151.8 L194.5 152.5 L195.0 153.0 L195.5 154.0 L196.0 154.6 L196.5 154.8 L197.0 155.6 L197.5 154.9 L198.0 155.0 L198.5 155.0 L199.0 155.0 L199.5 155.2 L200.0 154.8 L200.5 154.0 L201.0 153.3 L201.5 153.1 L202.0 152.0 L202.5 152.7 L203.0 152.0 L203.5 150.6 L204.0 149.7 L204.5 148.5 L205.0 146.4 L205.5 144.7 L206.0 144.9 L206.5 143.3 L207.0 143.6 L207.5 144.3 L208.0 146.5 L208.5 147.6 L209.0 149.0 L209.5 150.7 L210.0 151.9 L210.5 153.7 L211.0 155.2 L211.5 154.6 L212.0 154.9 L212.5 154.4 L213.0 155.0 L213.5 155.4 L214.0 155.9 L214.5 155.0 L215.0 154.1 L215.5 152.8 L216.0 150.7 L216.5 149.3 L217.0 148.1 L217.5 147.4 L218.0 145.1 L218.5 144.9 L219.0 143.6 L219.5 142.7 L220.0 144.2 L220.5 145.2 L221.0 147.6 L221.5 148.3 L222.0 149.7 L222.5 152.0 L223.0 153.2 L223.5 154.1 L224.0 154.5 L224.5 154.7 L225.0 153.4 L225.5 152.0 L226.0 151.0 L226.5 149.8 L227.0 149.2 L227.5 149.6 L228.0 150.8 L228.5 151.8 L229.0 152.8 L229.5 154.0 L230.0 155.3 L230.5 154.8 L231.0 154.0 L231.5 154.6 L232.0 154.2 L232.5 153.6 L233.0 152.4 L233.5 151.9 L234.0 150.9 L234.5 151.7 L235.0 152.2 L235.5 153.3 L236.0 153.8 L236.5 154.4 L237.0 154.8 L237.5 154.8 L238.0 154.0 L238.5 154.6 L239.0 153.9 L239.5 152.6 L240.0 152.1 L240.5 151.2 L241.0 150.7 L241.5 151.3 L242.0 151.5 L242.5 152.4 L243.0 151.3 L243.5 149.5 L244.0 148.0 L244.5 147.9 L245.0 146.5 L245.5 143.8 L246.0 145.7 L246.5 146.0 L247.0 148.3 L247.5 148.7 L248.0 150.4 L248.5 152.1 L249.0 153.8 L249.5 154.1 L250.0 155.8 L250.5 154.7 L251.0 155.2 L251.5 155.5 L252.0 154.7 L252.5 153.8 L253.0 152.3 L253.5 151.5 L254.0 150.7 L254.5 149.6 L255.0 148.9 L255.5 147.5 L256.0 147.6 L256.5 148.2 L257.0 149.0 L257.5 149.4 L258.0 151.3 L258.5 151.5 L259.0 151.8 L259.5 150.9 L260.0 150.1 L260.5 151.0 L261.0 151.7 L261.5 152.9 L262.0 153.9 L262.5 154.7 L263.0 154.7 L263.5 154.7 L264.0 155.5 L264.5 155.4 L265.0 154.8 L265.5 154.3 L266.0 153.6 L266.5 152.9 L267.0 151.9 L267.5 150.4 L268.0 150.6 L268.5 150.7 L269.0 152.3 L269.5 153.1 L270.0 153.8 L270.5 154.9 L271.0 154.2 L271.5 153.6 L272.0 152.4 L272.5 150.3 L273.0 149.1 L273.5 147.7 L274.0 147.9 L274.5 148.1 L275.0 150.3 L275.5 151.2 L276.0 152.7 L276.5 153.9 L277.0 155.3 L277.5 155.3 L278.0 155.6 L278.5 154.9 L278.5 162.5 L278.0 164.5 L277.5 166.4 L277.0 169.0 L276.5 166.7 L276.0 166.1 L275.5 163.2 L275.0 161.5 L274.5 159.7 L274.0 158.7 L273.5 158.2 L273.0 158.9 L272.5 159.6 L272.0 160.0 L271.5 159.3 L271.0 158.6 L270.5 158.5 L270.0 159.3 L269.5 158.5 L269.0 159.8 L268.5 159.7 L268.0 158.5 L267.5 158.8 L267.0 159.0 L266.5 158.3 L266.0 158.4 L265.5 159.9 L265.0 159.9 L264.5 162.2 L264.0 163.1 L263.5 165.5 L263.0 166.8 L262.5 165.9 L262.0 164.1 L261.5 162.0 L261.0 160.3 L260.5 159.3 L260.0 158.5 L259.5 158.7 L259.0 159.5 L258.5 158.4 L258.0 158.6 L257.5 159.3 L257.0 159.5 L256.5 159.6 L256.0 158.9 L255.5 158.8 L255.0 159.9 L254.5 159.6 L254.0 159.0 L253.5 159.4 L253.0 162.2 L252.5 165.1 L252.0 166.5 L251.5 169.3 L251.0 171.5 L250.5 169.7 L250.0 167.8 L249.5 164.3 L249.0 161.6 L248.5 159.0 L248.0 159.7 L247.5 158.2 L247.0 158.9 L246.5 158.9 L246.0 158.4 L245.5 158.5 L245.0 159.9 L244.5 158.3 L244.0 159.4 L243.5 159.7 L243.0 158.2 L242.5 158.8 L242.0 158.2 L241.5 158.6 L241.0 158.8 L240.5 159.7 L240.0 158.2 L239.5 158.5 L239.0 160.2 L238.5 161.5 L238.0 163.0 L237.5 164.5 L237.0 166.2 L236.5 164.8 L236.0 162.7 L235.5 161.4 L235.0 159.8 L234.5 159.0 L234.0 158.3 L233.5 158.4 L233.0 159.0 L232.5 159.1 L232.0 159.2 L231.5 159.7 L231.0 159.3 L230.5 159.9 L230.0 160.2 L229.5 160.9 L229.0 161.0 L228.5 160.5 L228.0 160.1 L227.5 159.5 L227.0 159.1 L226.5 159.5 L226.0 162.0 L225.5 164.1 L225.0 166.2 L224.5 167.1 L224.0 168.9 L223.5 167.3 L223.0 165.6 L222.5 163.0 L222.0 160.9 L221.5 158.3 L221.0 158.7 L220.5 159.4 L220.0 160.4 L219.5 160.8 L219.0 161.6 L218.5 162.3 L218.0 163.1 L217.5 161.8 L217.0 161.3 L216.5 160.3 L216.0 159.8 L215.5 159.6 L215.0 159.4 L214.5 161.3 L214.0 163.1 L213.5 164.2 L213.0 165.1 L212.5 166.1 L212.0 166.8 L211.5 166.0 L211.0 164.6 L210.5 163.4 L210.0 161.7 L209.5 160.3 L209.0 159.6 L208.5 159.1 L208.0 158.4 L207.5 159.6 L207.0 159.1 L206.5 159.2 L206.0 158.5 L205.5 159.3 L205.0 159.9 L204.5 160.2 L204.0 162.7 L203.5 166.0 L203.0 168.1 L202.5 169.9 L202.0 169.6 L201.5 169.0 L201.0 166.5 L200.5 164.1 L200.0 160.8 L199.5 158.8 L199.0 159.1 L198.5 158.4 L198.0 158.9 L197.5 158.8 L197.0 158.3 L196.5 159.8 L196.0 158.6 L195.5 158.9 L195.0 158.7 L194.5 158.7 L194.0 158.9 L193.5 159.8 L193.0 158.6 L192.5 159.9 L192.0 161.6 L191.5 163.2 L191.0 164.8 L190.5 167.5 L190.0 166.7 L189.5 165.0 L189.0 163.5 L188.5 161.7 L188.0 159.8 L187.5 158.4 L187.0 159.8 L186.5 159.3 L186.0 159.1 L185.5 158.3 L185.0 158.5 L184.5 159.5 L184.0 158.2 L183.5 159.8 L183.0 158.3 L182.5 159.2 L182.0 158.5 L181.5 159.3 L181.0 158.6 L180.5 159.3 L180.0 159.5 L179.5 158.3 L179.0 159.4 L178.5 160.7 L178.0 163.1 L177.5 166.7 L177.0 167.9 L176.5 170.9 L176.0 170.6 L175.5 167.7 L175.0 165.5 L174.5 162.7 L174.0 160.3 L173.5 159.6 L173.0 159.1 L172.5 159.6 L172.0 158.8 L171.5 159.2 L171.0 158.3 L170.5 159.6 L170.0 159.4 L169.5 159.6 L169.0 159.1 L168.5 158.7 L168.0 159.3 L167.5 159.6 L167.0 159.8 L166.5 159.3 L166.0 159.5 L165.5 158.4 L165.0 160.9 L164.5 163.1 L164.0 165.2 L163.5 166.0 L163.0 168.0 L162.5 167.1 L162.0 165.2 L161.5 163.6 L161.0 161.0 L160.5 159.5 L160.0 158.5 L159.5 159.9 L159.0 159.9 L158.5 159.2 L158.0 159.8 L157.5 158.8 L157.0 158.6 L156.5 158.5 L156.0 158.7 L155.5 159.2 L155.0 159.0 L154.5 158.1 L154.0 160.0 L153.5 158.7 L153.0 158.5 L152.5 159.4 L152.0 160.1 L151.5 160.8 L151.0 161.2 L150.5 162.4 L150.0 162.0 L149.5 161.3 L149.0 160.4 L148.5 159.8 L148.0 158.8 L147.5 158.1 L147.0 157.7 L146.5 157.8 L146.0 157.8 L145.5 157.7 L145.0 158.3 L144.5 158.2 L144.0 158.4 L143.5 158.9 L143.0 159.1 L142.5 159.2 L142.0 159.1 L141.5 158.8 L141.0 158.7 L140.5 158.2 L140.0 157.9 L139.5 157.9 L139.0 158.1 L138.5 158.3 L138.0 158.0 L137.5 157.7 L137.0 157.8 L136.5 158.2 L136.0 157.9 L135.5 158.1 L135.0 158.2 L134.5 157.9 L134.0 157.6 L133.5 157.7 L133.0 158.0 L132.5 157.7 L132.0 157.2 L131.5 157.2 L131.0 157.1 L130.5 157.2 L130.0 157.4 L129.5 157.2 L129.0 157.2 L128.5 157.2 L128.0 157.3 L127.5 157.2 L127.0 157.2 L126.5 157.3 L126.0 157.3 L125.5 157.1 L125.0 157.4 L124.5 157.2 L124.0 157.3 L123.5 157.3 L123.0 157.2 L122.5 157.2 L122.0 157.2 L121.5 157.4 L121.0 157.2 L120.5 157.2 L120.0 157.2 L119.5 157.4 L119.0 157.2 L118.5 157.2 L118.0 157.2 L117.5 157.2 L117.0 157.2 L116.5 157.2 L116.0 157.3 L115.5 157.2 L115.0 157.2 L114.5 157.7 L114.0 157.7 L113.5 158.1 L113.0 158.1 L112.5 157.5 L112.0 157.8 L111.5 157.9 L111.0 157.8 L110.5 158.2 L110.0 157.7 L109.5 158.0 L109.0 157.8 L108.5 157.9 L108.0 157.9 L107.5 157.9 L107.0 158.0 L106.5 158.1 L106.0 157.5 L105.5 157.6 L105.0 157.5 L104.5 157.6 L104.0 158.2 L103.5 157.5 L103.0 157.5 L102.5 157.7 L102.0 157.7 L101.5 157.8 L101.0 158.2 L100.5 159.0 L100.0 159.0 L99.5 159.5 L99.0 160.0 L98.5 160.3 L98.0 159.6 L97.5 159.6 L97.0 159.3 L96.5 158.7 L96.0 159.2 L95.5 158.2 L95.0 159.4 L94.5 158.9 L94.0 158.0 L93.5 159.0 L93.0 159.1 L92.5 158.6 L92.0 159.0 L91.5 158.2 L91.0 158.2 L90.5 159.1 L90.0 158.7 L89.5 158.5 L89.0 158.4 L88.5 158.8 L88.0 159.3 L87.5 159.5 L87.0 160.0 L86.5 160.2 L86.0 159.9 L85.5 159.5 L85.0 158.8 L84.5 159.0 L84.0 159.1 L83.5 159.3 L83.0 159.0 L82.5 158.4 L82.0 158.3 L81.5 158.4 L81.0 159.1 L80.5 159.3 L80.0 158.2 L79.5 158.8 L79.0 158.4 L78.5 158.3 L78.0 159.1 L77.5 158.1 L77.0 158.6 L76.5 158.9 L76.0 159.1 L75.5 159.5 L75.0 159.9 L74.5 160.0 L74.0 159.6 L73.5 159.2 L73.0 159.0 L72.5 159.0 L72.0 158.5 L71.5 158.1 L71.0 158.1 L70.5 159.2 L70.0 159.0 L69.5 159.2 L69.0 158.4 L68.5 158.3 L68.0 159.1 L67.5 158.7 L67.0 158.0 L66.5 158.7 L66.0 157.9 L65.5 159.2 L65.0 158.9 L64.5 159.3 L64.0 160.1 L63.5 161.5 L63.0 162.2 L62.5 163.7 L62.0 164.7 L61.5 164.2 L61.0 163.8 L60.5 162.3 L60.0 161.1 L59.5 160.2 L59.0 159.1 L58.5 158.9 L58.0 158.4 L57.5 158.9 L57.0 158.9 L56.5 159.5 L56.0 159.8 L55.5 160.6 L55.0 161.1 L54.5 160.9 L54.0 160.7 L53.5 159.7 L53.0 159.4 L52.5 158.7 L52.0 158.3 L51.5 159.0 L51.0 158.3 L50.5 158.2 L50.0 159.2 L49.5 158.3 L49.0 159.0 L48.5 158.6 L48.0 158.6 L47.5 158.1 L47.0 158.2 L46.5 158.2 L46.0 158.5 L45.5 158.9 L45.0 158.2 L44.5 158.8 L44.0 159.8 L43.5 160.6 L43.0 161.5 L42.5 162.0 L42.0 162.8 L41.5 162.5 L41.0 161.6 L40.5 161.0 L40.0 160.1 L39.5 159.2 L39.0 158.9 L38.5 157.9 L38.0 158.0 L37.5 157.9 L37.0 159.0 L36.5 158.9 L36.0 158.3 L35.5 159.3 L35.0 158.0 L34.5 159.0 L34.0 160.3 L33.5 161.2 L33.0 162.2 L32.5 162.8 L32.0 163.6 L31.5 163.5 L31.0 162.5 L30.5 161.3 L30.0 160.4 L29.5 159.7 L29.0 158.8 L28.5 159.3 L28.0 158.7 L27.5 158.7 L27.0 159.3 L26.5 160.1 L26.0 160.9 L25.5 161.7 L25.0 161.7 L24.5 161.3 L24.0 161.0 L23.5 160.2 L23.0 159.9 L22.5 159.4 L22.0 160.4 L21.5 161.1 L21.0 162.1 L20.5 163.0 L20.0 163.1 L19.5 164.3 L19.0 164.7 L18.5 163.9 L18.0 163.4 L17.5 163.2 L17.0 162.1 L16.5 161.3 L16.0 160.7 L15.5 159.6 L15.0 158.9 L14.5 158.8 L14.0 158.5 L13.5 159.4 L13.0 158.5 L12.5 158.7 L12.0 158.6 L11.5 158.4 L11.0 158.8 L10.5 158.8 L10.0 158.7 L9.5 159.0 L9.0 159.2 L8.5 158.5 L8.0 159.2 L7.5 159.1 L7.0 159.3 L6.5 158.9 L6.0 160.2 L5.5 160.8 L5.0 161.4 L4.5 162.1 L4.0 163.5 L3.5 162.7 L3.0 161.6 L2.5 160.9 L2.0 160.1 L1.5 159.0 L1.0 159.4 L0.5 157.9 L0.0 158.5Z" fill="#ffff00"/></svg>
<div style="left:792px;top:296px;width:687px;height:12px;background:#3c4146;border-bottom:1px solid #25282c"></div>
<svg style="left:792px;top:296px;" width="687" height="12" viewBox="0 0 687 12"><rect x="28.1" y="0" width="1" height="4" fill="#282b2f"/><rect x="56.8" y="0" width="1" height="4" fill="#282b2f"/><rect x="85.4" y="0" width="1" height="4" fill="#282b2f"/><rect x="114.1" y="0" width="1" height="4" fill="#282b2f"/><rect x="142.8" y="0" width="1" height="4" fill="#282b2f"/><rect x="171.4" y="0" width="1" height="4" fill="#282b2f"/><rect x="200.0" y="0" width="1" height="4" fill="#282b2f"/><rect x="228.7" y="0" width="1" height="4" fill="#282b2f"/><rect x="257.3" y="0" width="1" height="4" fill="#282b2f"/><rect x="286.0" y="0" width="1" height="4" fill="#282b2f"/><rect x="314.6" y="0" width="1" height="4" fill="#282b2f"/><rect x="343.3" y="0" width="1" height="4" fill="#282b2f"/><rect x="371.9" y="0" width="1" height="4" fill="#282b2f"/><rect x="400.6" y="0" width="1" height="4" fill="#282b2f"/><rect x="429.2" y="0" width="1" height="4" fill="#282b2f"/><rect x="457.9" y="0" width="1" height="4" fill="#282b2f"/><rect x="486.5" y="0" width="1" height="4" fill="#282b2f"/><rect x="515.2" y="0" width="1" height="4" fill="#282b2f"/><rect x="543.9" y="0" width="1" height="4" fill="#282b2f"/><rect x="572.5" y="0" width="1" height="4" fill="#282b2f"/><rect x="601.1" y="0" width="1" height="4" fill="#282b2f"/><rect x="629.8" y="0" width="1" height="4" fill="#282b2f"/><rect x="658.4" y="0" width="1" height="4" fill="#282b2f"/><path d="M583 11 L588.5 5 L594 11Z" fill="#ffffff"/></svg>
<div style="left:791px;top:355px;width:689px;height:1px;background:#2a2e32;"></div>
<div style="left:793px;top:356px;width:79px;height:20px;background:#31363b;border:1px solid #555a5f;border-top:none;border-radius:0 0 3px 3px"></div>
<span style="left:803.6px;top:360.84px;font-size:12px;color:#eff0f1;letter-spacing:-0.743px;"><u>C</u>lip Monitor</span>
<div style="left:873px;top:356px;width:95px;height:19px;background:#31363b;border:1px solid #464b50;border-top:none;border-radius:0 0 3px 3px"></div>
<span style="left:883px;top:359.84px;font-size:12px;color:#eff0f1;letter-spacing:-0.480px;">Pr<u>o</u>ject Monitor</span>
<svg style="left:928px;top:322px;" width="22" height="24" viewBox="0 0 22 24"><g fill="none" stroke="#eff0f1" stroke-width="1.2"><path d="M5.5 2.5v14"/><circle cx="5.5" cy="18.8" r="2.1"/><path d="M19 9.5h-8M14 6.5l-3 3 3 3"/></g></svg>
<svg style="left:960px;top:322px;" width="22" height="24" viewBox="0 0 22 24"><g fill="none" stroke="#eff0f1" stroke-width="1.2"><path d="M17 2.5v14"/><circle cx="17" cy="18.8" r="2.1"/><path d="M3 9.5h8M8 6.5l3 3-3 3"/></g></svg>
<svg style="left:996px;top:324px;" width="20" height="20" viewBox="0 0 20 20"><circle cx="10" cy="10" r="7.8" fill="none" stroke="#eff0f1" stroke-width="1.2"/><path d="M9.8 6.8v6.4l-4-3.2zM14 6.8v6.4l-4-3.2z" fill="#eff0f1"/></svg>
<svg style="left:1029px;top:324px;" width="20" height="20" viewBox="0 0 20 20"><circle cx="10" cy="10" r="7.8" fill="none" stroke="#eff0f1" stroke-width="1.2"/><path d="M8.3 6.6v6.8l4.6-3.4z" fill="#eff0f1"/></svg>
<svg style="left:1055px;top:331px;" width="12" height="8" viewBox="0 0 12 8"><path d="M1 1h9l-4.5 5z" fill="#c9cbcc"/></svg>
<svg style="left:1074px;top:324px;" width="20" height="20" viewBox="0 0 20 20"><circle cx="10" cy="10" r="7.8" fill="none" stroke="#eff0f1" stroke-width="1.2"/><path d="M6 6.8v6.4l4-3.2zM10.2 6.8v6.4l4-3.2z" fill="#eff0f1"/></svg>
<svg style="left:1107px;top:324px;" width="20" height="20" viewBox="0 0 20 20"><path d="M1 6.5h3.2L9 2v16l-4.8-4.5H1z" fill="#eff0f1"/><path d="M11.5 5.5a6 6 0 0 1 0 9" fill="none" stroke="#eff0f1" stroke-width="1.3"/><path d="M13.8 3a9.5 9.5 0 0 1 0 14" fill="none" stroke="#9a9ea1" stroke-width="1.2"/></svg>
<svg style="left:1124px;top:341px;" width="9" height="6" viewBox="0 0 9 6"><path d="M0.8 0.8h6.6l-3.3 3.6z" fill="#c9cbcc"/></svg>
<div style="left:1135px;top:320px;width:31px;height:30px;background:#3b4045;border:1px solid #555a5f;border-radius:3px"></div>
<svg style="left:1141px;top:325px;" width="20" height="20" viewBox="0 0 20 20"><g fill="none" stroke="#eff0f1" stroke-width="1.1"><path d="M3 3h14v14H3z" stroke-dasharray="2.2 1.6"/></g><g fill="#31363b" stroke="#eff0f1" stroke-width="1"><rect x="1.5" y="1.5" width="3" height="3"/><rect x="15.5" y="1.5" width="3" height="3"/><rect x="1.5" y="15.5" width="3" height="3"/><rect x="15.5" y="15.5" width="3" height="3"/></g></svg>
<span class="m" style="left:1182.8px;top:329.97px;font-size:10.9px;color:#eff0f1;letter-spacing:0.368px;">00:00:21:10</span>
<div style="left:1263px;top:324px;width:1px;height:22px;background:#2a2e32;"></div>
<svg style="left:1265px;top:326px;" width="11" height="18" viewBox="0 0 11 18"><path d="M1 6.800h8l-4-4.600zM1 11h8l-4 4.600z" fill="#b0b3b5"/></svg>
<svg style="left:1283px;top:325px;" width="28" height="24" viewBox="0 0 28 24"><path d="M1 3.5h18M1 9.5h18M1 15.5h18" stroke="#eff0f1" stroke-width="2.3"/><path d="M18 18.2h6.5l-3.25 3.6z" fill="#c9cbcc"/></svg>
<svg style="left:1315px;top:326px;" width="18" height="18" viewBox="0 0 18 18"><path d="M9.500 1v15M2 8.500h15" stroke="#eff0f1" stroke-width="1"/></svg>
<div style="left:1350px;top:320px;width:126px;height:8px;background:linear-gradient(90deg,#1f2e25 0,#1f2e25 75%,#2f2a28 100%);"></div>
<div style="left:1350px;top:320px;width:48px;height:8px;background:#1c6b24;"></div>
<div style="left:1398px;top:320px;width:44px;height:8px;background:#22932e;"></div>
<div style="left:1379px;top:320px;width:1px;height:8px;background:#1a5a20;"></div>
<div style="left:1426px;top:320px;width:1px;height:8px;background:#1c7a26;"></div>
<div style="left:1445px;top:320px;width:2px;height:8px;background:#e8e8e8;"></div>
<div style="left:1350px;top:331px;width:126px;height:8px;background:linear-gradient(90deg,#1f2e25 0,#1f2e25 75%,#2f2a28 100%);"></div>
<div style="left:1350px;top:331px;width:48px;height:8px;background:#1c6b24;"></div>
<div style="left:1398px;top:331px;width:44px;height:8px;background:#22932e;"></div>
<div style="left:1379px;top:331px;width:1px;height:8px;background:#1a5a20;"></div>
<div style="left:1426px;top:331px;width:1px;height:8px;background:#1c7a26;"></div>
<div style="left:1445px;top:331px;width:2px;height:8px;background:#e8e8e8;"></div>
<span style="left:1372px;top:340.46px;font-size:9.5px;color:#84888b;">-30</span>
<span style="left:1391px;top:340.46px;font-size:9.5px;color:#84888b;">-20</span>
<span style="left:1418px;top:340.46px;font-size:9.5px;color:#84888b;">-10</span>
<span style="left:1441px;top:340.46px;font-size:9.5px;color:#84888b;">-5</span>
<span style="left:1455px;top:340.46px;font-size:9.5px;color:#84888b;">-2</span>
<span style="left:1467px;top:340.46px;font-size:9.5px;color:#84888b;">0</span>
<div style="left:6px;top:392px;width:105px;height:22px;background:linear-gradient(#40454a,#393e43);border:1px solid #54595e;border-radius:3px"></div>
<svg style="left:13px;top:396px;" width="14" height="14" viewBox="0 0 14 14"><rect x="0.500" y="0.500" width="12" height="12" fill="none" stroke="#a4a8ab"/><g fill="#a8abad"><rect x="2" y="2" width="3" height="3"/><rect x="8" y="2" width="3" height="3"/><rect x="5" y="5" width="3" height="3"/><rect x="2" y="8" width="3" height="3"/><rect x="8" y="8" width="3" height="3"/></g></svg>
<span style="left:29px;top:397.84px;font-size:12px;color:#eff0f1;letter-spacing:-0.597px;">High Quality</span>
<svg style="left:96px;top:400px;" width="11" height="7" viewBox="0 0 11 7"><path d="M0.8 0.8h8.4l-4.2 4.6z" fill="#c9cbcc"/></svg>
<div style="left:114px;top:392px;width:105px;height:22px;background:linear-gradient(#40454a,#393e43);border:1px solid #54595e;border-radius:3px"></div>
<svg style="left:120px;top:396px;" width="16" height="14" viewBox="0 0 16 14"><rect x="1" y="7.5" width="12" height="2.6" fill="#eff0f1"/><rect x="5" y="2" width="4" height="3.5" fill="#3daee9"/></svg>
<span style="left:137px;top:397.84px;font-size:12px;color:#eff0f1;letter-spacing:-0.911px;">Normal mode</span>
<svg style="left:536px;top:405px;" width="8" height="5" viewBox="0 0 8 5"><path d="M0.5 0.5h6l-3 3.3z" fill="#c9cbcc"/></svg>
<div style="left:548px;top:392px;width:1px;height:22px;background:#383d42;"></div>
<svg style="left:557px;top:395px;" width="20" height="16" viewBox="0 0 20 16"><rect x="1" y="7.5" width="4" height="3.6" fill="#eff0f1"/><rect x="11" y="7.5" width="3" height="3.6" fill="#eff0f1"/><path d="M14 6l5 3.3-5 3.3z" fill="#eff0f1"/><rect x="5.5" y="5.5" width="5.5" height="5.6" fill="#3daee9"/><path d="M5.5 1.5h5.5l-2.75 2.8z" fill="#3daee9"/></svg>
<svg style="left:588px;top:395px;" width="20" height="16" viewBox="0 0 20 16"><rect x="1" y="8" width="17" height="4" fill="#eff0f1"/><rect x="6" y="4.5" width="6" height="5" fill="#3daee9"/><path d="M6 0.8h6l-3 2.8z" fill="#3daee9"/></svg>
<svg style="left:619px;top:399px;" width="20" height="12" viewBox="0 0 20 12"><rect x="1" y="3" width="3.5" height="5.5" fill="#eff0f1"/><path d="M6.5 3.5l4 4.5M10.5 3.5l-4 4.5" stroke="#da4453" stroke-width="1.3"/><path d="M16 3.5v4.6h3V3.5zM16.2 1.5v8.6l-5-4.3z" fill="#eff0f1"/></svg>
<svg style="left:650px;top:399px;" width="20" height="12" viewBox="0 0 20 12"><rect x="1" y="3" width="3.5" height="5.5" fill="#eff0f1"/><path d="M7.5 3.5l4 4.5M11.5 3.5l-4 4.5" stroke="#da4453" stroke-width="1.3"/><rect x="14.5" y="3" width="3.5" height="5.5" fill="#eff0f1"/></svg>
<div style="left:679px;top:392px;width:1px;height:22px;background:#383d42;"></div>
<svg style="left:690.5px;top:394.2px;" width="17" height="17" viewBox="0 0 20 20"><path d="M10 1l2.7 6.2 6.6.6-5 4.4 1.5 6.6L10 15.3 4.2 18.8l1.5-6.6-5-4.4 6.6-.6z" fill="#eff0f1"/></svg>
<svg style="left:714px;top:410px;" width="8" height="5" viewBox="0 0 8 5"><path d="M0.5 0.5h6l-3 3.3z" fill="#c9cbcc"/></svg>
<div style="left:727px;top:392px;width:1px;height:22px;background:#383d42;"></div>
<svg style="left:736px;top:394px;" width="20" height="20" viewBox="0 0 20 20"><circle cx="10" cy="10" r="7.8" fill="none" stroke="#eff0f1" stroke-width="1.2"/><path d="M10.600 6.800v6.400l3.800-3.200z" fill="#eff0f1"/><path d="M9.600 5.400a4.600 4.600 0 0 0 0 9.200z" fill="#da4453"/></svg>
<svg style="left:761px;top:399px;" width="12" height="8" viewBox="0 0 12 8"><path d="M1 1h9l-4.5 5z" fill="#c9cbcc"/></svg>
<svg style="left:733px;top:380px;" width="22" height="4" viewBox="0 0 22 4"><rect x="0.8" y="1.200" width="1.900" height="1.500" fill="#74787c"/><rect x="4.0" y="1.200" width="1.900" height="1.500" fill="#74787c"/><rect x="7.2" y="1.200" width="1.900" height="1.500" fill="#74787c"/><rect x="10.4" y="1.200" width="1.900" height="1.500" fill="#74787c"/><rect x="13.6" y="1.200" width="1.900" height="1.500" fill="#74787c"/><rect x="16.8" y="1.200" width="1.900" height="1.500" fill="#74787c"/></svg>
<div style="left:2px;top:421px;width:1478px;height:1px;background:#2b2f33;"></div>
<div style="left:2px;top:422px;width:1478px;height:1px;background:#ececed;"></div>
<div style="left:2px;top:423px;width:1478px;height:1px;background:#6a6e72;"></div>
<div style="left:2px;top:424px;width:1px;height:297px;background:#3d4247;"></div>
<div style="left:3px;top:424px;width:150px;height:23px;background:#3a3f44;"></div>
<div style="left:153px;top:424px;width:4px;height:297px;background:#43474b;"></div>
<div style="left:156.5px;top:424px;width:1px;height:297px;background:#2a2d31;"></div>
<div style="left:157px;top:424px;width:1322px;height:23px;background:#3a3f44;"></div>
<svg style="left:26px;top:428px;" width="16" height="16" viewBox="0 0 16 16"><g fill="none" stroke="#eff0f1" stroke-width="1.1"><rect x="2.400" y="2.400" width="3" height="3"/><path d="M5.800 2.400h7.900v3.300M2.300 5.700v7.800h5.200M10.900 7.400v6.300M8.500 11.400l2.400 2.400 2.400-2.400"/></g></svg>
<svg style="left:69px;top:428px;" width="16" height="16" viewBox="0 0 16 16"><g fill="none" stroke="#eff0f1" stroke-width="1.1"><path d="M4.400 2.400h-2.100v2.800M2.300 7.400v2.200M8.100 13.500h1.700M12 13.500h1.700v-2"/><rect x="2.800" y="10.700" width="3" height="3"/><path d="M10.600 3.600v7.200M8.200 6l2.400-2.400 2.400 2.400"/></g></svg>
<svg style="left:112px;top:428px;" width="16" height="16" viewBox="0 0 16 16"><g fill="none" stroke="#b4b7b9" stroke-width="1"><path d="M3.500 5.200v6.700M12.500 5.200v6.700M3.500 8.500h9M5.500 6.800l-1.700 1.700 1.700 1.700M10.500 6.800l1.700 1.700-1.700 1.700"/><path d="M2 14.100L13.700 2.400" stroke="#eff0f1" stroke-width="1.2"/></g></svg>
<span style="left:157.7px;top:425.95px;font-size:11.4px;color:#eff0f1;max-width:1321px;overflow:hidden">00:00:00,00</span>
<div style="left:229px;top:439px;width:1px;height:8px;background:#1d2023;"></div>
<span style="left:230.7px;top:425.95px;font-size:11.4px;color:#eff0f1;max-width:1248px;overflow:hidden">00:00:10,00</span>
<div style="left:302px;top:439px;width:1px;height:8px;background:#1d2023;"></div>
<span style="left:303.7px;top:425.95px;font-size:11.4px;color:#eff0f1;max-width:1175px;overflow:hidden">00:00:20,00</span>
<div style="left:375px;top:439px;width:1px;height:8px;background:#1d2023;"></div>
<span style="left:376.7px;top:425.95px;font-size:11.4px;color:#eff0f1;max-width:1102px;overflow:hidden">00:00:30,00</span>
<div style="left:448px;top:439px;width:1px;height:8px;background:#1d2023;"></div>
<span style="left:449.7px;top:425.95px;font-size:11.4px;color:#eff0f1;max-width:1029px;overflow:hidden">00:00:40,00</span>
<div style="left:521px;top:439px;width:1px;height:8px;background:#1d2023;"></div>
<span style="left:522.7px;top:425.95px;font-size:11.4px;color:#eff0f1;max-width:956px;overflow:hidden">00:00:50,00</span>
<div style="left:594px;top:439px;width:1px;height:8px;background:#1d2023;"></div>
<span style="left:595.7px;top:425.95px;font-size:11.4px;color:#eff0f1;max-width:883px;overflow:hidden">00:01:00,02</span>
<div style="left:667px;top:439px;width:1px;height:8px;background:#1d2023;"></div>
<span style="left:668.7px;top:425.95px;font-size:11.4px;color:#eff0f1;max-width:810px;overflow:hidden">00:01:10,02</span>
<div style="left:740px;top:439px;width:1px;height:8px;background:#1d2023;"></div>
<span style="left:741.7px;top:425.95px;font-size:11.4px;color:#eff0f1;max-width:737px;overflow:hidden">00:01:20,02</span>
<div style="left:813px;top:439px;width:1px;height:8px;background:#1d2023;"></div>
<span style="left:814.7px;top:425.95px;font-size:11.4px;color:#eff0f1;max-width:664px;overflow:hidden">00:01:30,02</span>
<div style="left:886px;top:439px;width:1px;height:8px;background:#1d2023;"></div>
<span style="left:887.7px;top:425.95px;font-size:11.4px;color:#eff0f1;max-width:591px;overflow:hidden">00:01:40,02</span>
<div style="left:959px;top:439px;width:1px;height:8px;background:#1d2023;"></div>
<span style="left:960.7px;top:425.95px;font-size:11.4px;color:#eff0f1;max-width:518px;overflow:hidden">00:01:50,02</span>
<div style="left:1032px;top:439px;width:1px;height:8px;background:#1d2023;"></div>
<span style="left:1033.7px;top:425.95px;font-size:11.4px;color:#eff0f1;max-width:445px;overflow:hidden">00:02:00,04</span>
<div style="left:1105px;top:439px;width:1px;height:8px;background:#1d2023;"></div>
<span style="left:1106.7px;top:425.95px;font-size:11.4px;color:#eff0f1;max-width:372px;overflow:hidden">00:02:10,04</span>
<div style="left:1178px;top:439px;width:1px;height:8px;background:#1d2023;"></div>
<span style="left:1179.7px;top:425.95px;font-size:11.4px;color:#eff0f1;max-width:299px;overflow:hidden">00:02:20,04</span>
<div style="left:1251px;top:439px;width:1px;height:8px;background:#1d2023;"></div>
<span style="left:1252.7px;top:425.95px;font-size:11.4px;color:#eff0f1;max-width:226px;overflow:hidden">00:02:30,04</span>
<div style="left:1324px;top:439px;width:1px;height:8px;background:#1d2023;"></div>
<span style="left:1325.7px;top:425.95px;font-size:11.4px;color:#eff0f1;max-width:153px;overflow:hidden">00:02:40,04</span>
<div style="left:1397px;top:439px;width:1px;height:8px;background:#1d2023;"></div>
<span style="left:1398.7px;top:425.95px;font-size:11.4px;color:#eff0f1;max-width:80px;overflow:hidden">00:02:50,04</span>
<div style="left:1470px;top:439px;width:1px;height:8px;background:#1d2023;"></div>
<span style="left:1471.7px;top:425.95px;font-size:11.4px;color:#eff0f1;max-width:7px;overflow:hidden">00:03:00,04</span>
<div style="left:158px;top:438px;width:29px;height:8px;background:#3f6279;"></div>
<div style="left:170px;top:440px;width:5px;height:5px;background:#eff0f1;border:1px solid #31363b"></div>
<div style="left:3px;top:447px;width:150px;height:56px;background:#31363b;"></div>
<div style="left:3px;top:503px;width:150px;height:1px;background:#e3e4e5;"></div>
<div style="left:5px;top:451.5px;width:12px;height:12.5px;background:radial-gradient(circle at 42% 30%,#54585c 0,#34383b 50%,#1c1e20 100%);border-radius:50%"></div>
<span style="left:21px;top:452.84px;font-size:12px;color:#eff0f1;letter-spacing:-0.826px;">Video 3</span>
<svg style="left:15px;top:475px;" width="16" height="19" viewBox="0 0 16 19"><g fill="none" stroke="#eff0f1" stroke-width="1.3"><rect x="1.700" y="8.700" width="12.600" height="8.600"/><path d="M4.300 8.500V5a3.700 3.700 0 0 1 7.400 0v0.800"/></g></svg>
<svg style="left:46px;top:475px;" width="20" height="20" viewBox="0 0 20 20"><path d="M1 6.500h3.200L9.500 1.500v17l-5.300-5H1z" fill="#eff0f1"/><path d="M12 5.500a6 6 0 0 1 0 9" fill="none" stroke="#eff0f1" stroke-width="1.300"/><path d="M14.300 2.800a9.800 9.800 0 0 1 0 14.400" fill="none" stroke="#a9adb0" stroke-width="1.200"/></svg>
<svg style="left:79px;top:475px;" width="19" height="19" viewBox="0 0 19 19"><g fill="none" stroke="#eff0f1"><rect x="1" y="1" width="17" height="17" stroke-width="1.400"/><path d="M4.500 1v17M14.500 1v17" stroke-width="1.200"/><path d="M4.500 9.500h10" stroke-width="2.200"/><path d="M1 4h3.500M1 7h3.500M1 10h3.500M1 13h3.500M1 16h3.500M14.500 4h3.500M14.500 7h3.500M14.500 10h3.500M14.500 13h3.500M14.500 16h3.500" stroke-width="0.9"/></g></svg>
<div style="left:3px;top:504px;width:150px;height:56px;background:#31363b;"></div>
<div style="left:3px;top:560px;width:150px;height:1px;background:#e3e4e5;"></div>
<div style="left:5px;top:508.5px;width:12px;height:12.5px;background:radial-gradient(circle at 42% 30%,#54585c 0,#34383b 50%,#1c1e20 100%);border-radius:50%"></div>
<span style="left:21px;top:509.84px;font-size:12px;color:#eff0f1;letter-spacing:-0.826px;">Video 2</span>
<svg style="left:15px;top:532px;" width="16" height="19" viewBox="0 0 16 19"><g fill="none" stroke="#eff0f1" stroke-width="1.3"><rect x="1.700" y="8.700" width="12.600" height="8.600"/><path d="M4.300 8.500V5a3.700 3.700 0 0 1 7.400 0v0.800"/></g></svg>
<svg style="left:46px;top:532px;" width="20" height="20" viewBox="0 0 20 20"><path d="M1 6.500h3.200L9.500 1.500v17l-5.300-5H1z" fill="#eff0f1"/><path d="M12 5.500a6 6 0 0 1 0 9" fill="none" stroke="#eff0f1" stroke-width="1.300"/><path d="M14.300 2.800a9.800 9.800 0 0 1 0 14.400" fill="none" stroke="#a9adb0" stroke-width="1.200"/></svg>
<svg style="left:79px;top:532px;" width="19" height="19" viewBox="0 0 19 19"><g fill="none" stroke="#eff0f1"><rect x="1" y="1" width="17" height="17" stroke-width="1.400"/><path d="M4.500 1v17M14.500 1v17" stroke-width="1.200"/><path d="M4.500 9.500h10" stroke-width="2.200"/><path d="M1 4h3.500M1 7h3.500M1 10h3.500M1 13h3.500M1 16h3.500M14.500 4h3.500M14.500 7h3.500M14.500 10h3.500M14.500 13h3.500M14.500 16h3.500" stroke-width="0.9"/></g></svg>
<div style="left:3px;top:561px;width:150px;height:56px;background:#1e3f54;"></div>
<div style="left:3px;top:617px;width:150px;height:1px;background:#e3e4e5;"></div>
<div style="left:5px;top:565.5px;width:12px;height:12.5px;background:radial-gradient(circle at 42% 30%,#54585c 0,#34383b 50%,#1c1e20 100%);border-radius:50%"></div>
<span style="left:21px;top:566.84px;font-size:12px;color:#eff0f1;letter-spacing:-0.826px;">Video 1</span>
<svg style="left:15px;top:589px;" width="16" height="19" viewBox="0 0 16 19"><g fill="none" stroke="#eff0f1" stroke-width="1.3"><rect x="1.700" y="8.700" width="12.600" height="8.600"/><path d="M4.300 8.500V5a3.700 3.700 0 0 1 7.400 0v0.800"/></g></svg>
<svg style="left:46px;top:589px;" width="20" height="20" viewBox="0 0 20 20"><path d="M1 6.500h3.200L9.500 1.500v17l-5.300-5H1z" fill="#eff0f1"/><path d="M12 5.500a6 6 0 0 1 0 9" fill="none" stroke="#eff0f1" stroke-width="1.300"/><path d="M14.300 2.800a9.800 9.800 0 0 1 0 14.400" fill="none" stroke="#a9adb0" stroke-width="1.200"/></svg>
<svg style="left:79px;top:589px;" width="19" height="19" viewBox="0 0 19 19"><g fill="none" stroke="#eff0f1"><rect x="1" y="1" width="17" height="17" stroke-width="1.400"/><path d="M4.500 1v17M14.500 1v17" stroke-width="1.200"/><path d="M4.500 9.500h10" stroke-width="2.200"/><path d="M1 4h3.500M1 7h3.500M1 10h3.500M1 13h3.500M1 16h3.500M14.500 4h3.500M14.500 7h3.500M14.500 10h3.500M14.500 13h3.500M14.500 16h3.500" stroke-width="0.9"/></g></svg>
<div style="left:3px;top:618px;width:150px;height:56px;background:#4d4d4d;"></div>
<div style="left:3px;top:674px;width:150px;height:1px;background:#e3e4e5;"></div>
<div style="left:5px;top:622.5px;width:12px;height:12.5px;background:radial-gradient(circle at 42% 30%,#54585c 0,#34383b 50%,#1c1e20 100%);border-radius:50%"></div>
<span style="left:21px;top:623.84px;font-size:12px;color:#eff0f1;letter-spacing:-0.743px;">Audio 1</span>
<svg style="left:15px;top:646px;" width="16" height="19" viewBox="0 0 16 19"><g fill="none" stroke="#eff0f1" stroke-width="1.3"><rect x="1.700" y="8.700" width="12.600" height="8.600"/><path d="M4.300 8.500V5a3.700 3.700 0 0 1 7.400 0v0.800"/></g></svg>
<svg style="left:46px;top:646px;" width="20" height="20" viewBox="0 0 20 20"><path d="M1 6.500h3.200L9.500 1.500v17l-5.300-5H1z" fill="#eff0f1"/><path d="M12 5.500a6 6 0 0 1 0 9" fill="none" stroke="#eff0f1" stroke-width="1.300"/><path d="M14.300 2.800a9.800 9.800 0 0 1 0 14.400" fill="none" stroke="#a9adb0" stroke-width="1.200"/></svg>
<div style="left:3px;top:675px;width:150px;height:46px;background:#4d4d4d;"></div>
<div style="left:5px;top:679.5px;width:12px;height:12.5px;background:radial-gradient(circle at 42% 30%,#54585c 0,#34383b 50%,#1c1e20 100%);border-radius:50%"></div>
<span style="left:21px;top:680.84px;font-size:12px;color:#eff0f1;letter-spacing:-0.743px;">Audio 2</span>
<svg style="left:15px;top:703px;" width="16" height="19" viewBox="0 0 16 19"><g fill="none" stroke="#eff0f1" stroke-width="1.3"><rect x="1.700" y="8.700" width="12.600" height="8.600"/><path d="M4.300 8.500V5a3.700 3.700 0 0 1 7.400 0v0.800"/></g></svg>
<svg style="left:46px;top:703px;" width="20" height="20" viewBox="0 0 20 20"><path d="M1 6.500h3.200L9.500 1.500v17l-5.300-5H1z" fill="#eff0f1"/><path d="M12 5.500a6 6 0 0 1 0 9" fill="none" stroke="#eff0f1" stroke-width="1.300"/><path d="M14.300 2.800a9.800 9.800 0 0 1 0 14.400" fill="none" stroke="#a9adb0" stroke-width="1.200"/></svg>
<div style="left:3px;top:721px;width:1477px;height:30px;background:#31363b;"></div>
<div style="left:157px;top:447px;width:1308px;height:274px;background:#232629;"></div>
<div style="left:157px;top:561px;width:1308px;height:56px;background:#223a48;"></div>
<div style="left:157px;top:618px;width:1308px;height:103px;background:#31363b;"></div>
<div style="left:157px;top:503px;width:1308px;height:1px;background:#474b4f;"></div>
<div style="left:157px;top:560px;width:1308px;height:1px;background:#474b4f;"></div>
<div style="left:157px;top:617px;width:1308px;height:1px;background:#474b4f;"></div>
<div style="left:157px;top:674px;width:1308px;height:1px;background:#474b4f;"></div>
<div style="left:153px;top:721px;width:1327px;height:1px;background:#2a2e32;"></div>
<svg style="left:157px;top:561px;" width="221" height="56" viewBox="0 0 221 56"><rect x="0" y="0" width="221" height="56" fill="#000"/><rect x="73" y="22" width="76" height="34" fill="#8aa3d8"/><g transform="translate(0.500 0) scale(1.474)"><path d="M36.200 0 L36 8 L23 9.200 C20 9.600 20 12 23 13 L35 17.500 C40.500 20 40 28 35.500 32 C31 36 24 38 6 38 L6.500 29.700 L22 28 C26 27.500 27.500 25 24 23.500 L12 18 C8 15 8.500 6 12 3 C14 1 16 0 20 0 Z" fill="#0c4a8e"/></g><rect x="0" y="48.0" width="1" height="8.0" fill="#50508f"/><rect x="1" y="46.7" width="1" height="9.3" fill="#50508f"/><rect x="2" y="42.4" width="1" height="13.6" fill="#50508f"/><rect x="3" y="47.9" width="1" height="8.1" fill="#50508f"/><rect x="4" y="47.3" width="1" height="8.7" fill="#50508f"/><rect x="5" y="46.4" width="1" height="9.6" fill="#50508f"/><rect x="6" y="51.5" width="1" height="4.5" fill="#50508f"/><rect x="7" y="47.3" width="1" height="8.7" fill="#50508f"/><rect x="8" y="45.9" width="1" height="10.1" fill="#50508f"/><rect x="9" y="43.9" width="1" height="12.1" fill="#50508f"/><rect x="10" y="52.7" width="1" height="3.3" fill="#50508f"/><rect x="11" y="49.9" width="1" height="6.1" fill="#50508f"/><rect x="12" y="52.8" width="1" height="3.2" fill="#50508f"/><rect x="13" y="43.7" width="1" height="12.3" fill="#50508f"/><rect x="14" y="45.1" width="1" height="10.9" fill="#50508f"/><rect x="15" y="53.5" width="1" height="2.5" fill="#50508f"/><rect x="16" y="41.7" width="1" height="14.3" fill="#50508f"/><rect x="17" y="41.9" width="1" height="14.1" fill="#50508f"/><rect x="18" y="45.6" width="1" height="10.4" fill="#50508f"/><rect x="19" y="46.0" width="1" height="10.0" fill="#50508f"/><rect x="20" y="51.8" width="1" height="4.2" fill="#50508f"/><rect x="21" y="53.9" width="1" height="2.1" fill="#50508f"/><rect x="22" y="47.1" width="1" height="8.9" fill="#50508f"/><rect x="23" y="53.2" width="1" height="2.8" fill="#50508f"/><rect x="24" y="51.4" width="1" height="4.6" fill="#50508f"/><rect x="25" y="50.7" width="1" height="5.3" fill="#50508f"/><rect x="26" y="53.7" width="1" height="2.3" fill="#50508f"/><rect x="27" y="47.9" width="1" height="8.1" fill="#50508f"/><rect x="28" y="48.2" width="1" height="7.8" fill="#50508f"/><rect x="29" y="43.3" width="1" height="12.7" fill="#50508f"/><rect x="30" y="47.2" width="1" height="8.8" fill="#50508f"/><rect x="31" y="45.7" width="1" height="10.3" fill="#50508f"/><rect x="32" y="47.4" width="1" height="8.6" fill="#50508f"/><rect x="33" y="45.5" width="1" height="10.5" fill="#50508f"/><rect x="34" y="48.0" width="1" height="8.0" fill="#50508f"/><rect x="35" y="50.2" width="1" height="5.8" fill="#50508f"/><rect x="36" y="41.5" width="1" height="14.5" fill="#50508f"/><rect x="37" y="41.5" width="1" height="14.5" fill="#50508f"/><rect x="38" y="43.4" width="1" height="12.6" fill="#50508f"/><rect x="39" y="44.9" width="1" height="11.1" fill="#50508f"/><rect x="40" y="49.8" width="1" height="6.2" fill="#50508f"/><rect x="41" y="50.9" width="1" height="5.1" fill="#50508f"/><rect x="42" y="50.1" width="1" height="5.9" fill="#50508f"/><rect x="43" y="53.1" width="1" height="2.9" fill="#50508f"/><rect x="44" y="44.2" width="1" height="11.8" fill="#50508f"/><rect x="45" y="48.7" width="1" height="7.3" fill="#50508f"/><rect x="46" y="43.3" width="1" height="12.7" fill="#50508f"/><rect x="47" y="48.8" width="1" height="7.2" fill="#50508f"/><rect x="48" y="42.0" width="1" height="14.0" fill="#50508f"/><rect x="49" y="43.3" width="1" height="12.7" fill="#50508f"/><rect x="50" y="54.2" width="1" height="1.8" fill="#50508f"/><rect x="51" y="51.1" width="1" height="4.9" fill="#50508f"/><rect x="52" y="42.5" width="1" height="13.5" fill="#50508f"/><rect x="53" y="47.8" width="1" height="8.2" fill="#50508f"/><rect x="54" y="41.7" width="1" height="14.3" fill="#50508f"/><rect x="55" y="48.7" width="1" height="7.3" fill="#50508f"/><rect x="56" y="53.0" width="1" height="3.0" fill="#50508f"/><rect x="57" y="45.9" width="1" height="10.1" fill="#50508f"/><rect x="58" y="44.1" width="1" height="11.9" fill="#50508f"/><rect x="59" y="50.3" width="1" height="5.7" fill="#50508f"/><rect x="60" y="52.8" width="1" height="3.2" fill="#50508f"/><rect x="61" y="49.5" width="1" height="6.5" fill="#50508f"/><rect x="62" y="41.9" width="1" height="14.1" fill="#50508f"/><rect x="63" y="44.3" width="1" height="11.7" fill="#50508f"/><rect x="64" y="52.4" width="1" height="3.6" fill="#50508f"/><rect x="65" y="50.6" width="1" height="5.4" fill="#50508f"/><rect x="66" y="52.6" width="1" height="3.4" fill="#50508f"/><rect x="67" y="53.2" width="1" height="2.8" fill="#50508f"/><rect x="68" y="43.9" width="1" height="12.1" fill="#50508f"/><rect x="69" y="51.6" width="1" height="4.4" fill="#50508f"/><rect x="70" y="46.7" width="1" height="9.3" fill="#50508f"/><rect x="71" y="48.1" width="1" height="7.9" fill="#50508f"/><rect x="72" y="51.4" width="1" height="4.6" fill="#50508f"/><rect x="73" y="43.8" width="1" height="12.2" fill="#50508f"/><rect x="74" y="52.0" width="1" height="4.0" fill="#50508f"/><rect x="75" y="44.9" width="1" height="11.1" fill="#50508f"/><rect x="76" y="52.2" width="1" height="3.8" fill="#50508f"/><rect x="77" y="47.9" width="1" height="8.1" fill="#50508f"/><rect x="78" y="50.8" width="1" height="5.2" fill="#50508f"/><rect x="79" y="50.0" width="1" height="6.0" fill="#50508f"/><rect x="80" y="40.7" width="1" height="15.3" fill="#50508f"/><rect x="81" y="42.8" width="1" height="13.2" fill="#50508f"/><rect x="82" y="49.5" width="1" height="6.5" fill="#50508f"/><rect x="83" y="41.8" width="1" height="14.2" fill="#50508f"/><rect x="84" y="50.8" width="1" height="5.2" fill="#50508f"/><rect x="85" y="48.3" width="1" height="7.7" fill="#50508f"/><rect x="86" y="42.2" width="1" height="13.8" fill="#50508f"/><rect x="87" y="44.9" width="1" height="11.1" fill="#50508f"/><rect x="88" y="52.5" width="1" height="3.5" fill="#50508f"/><rect x="89" y="40.5" width="1" height="15.5" fill="#50508f"/><rect x="90" y="50.8" width="1" height="5.2" fill="#50508f"/><rect x="91" y="50.1" width="1" height="5.9" fill="#50508f"/><rect x="92" y="43.2" width="1" height="12.8" fill="#50508f"/><rect x="93" y="49.2" width="1" height="6.8" fill="#50508f"/><rect x="94" y="49.6" width="1" height="6.4" fill="#50508f"/><rect x="95" y="52.9" width="1" height="3.1" fill="#50508f"/><rect x="96" y="52.6" width="1" height="3.4" fill="#50508f"/><rect x="97" y="45.7" width="1" height="10.3" fill="#50508f"/><rect x="98" y="50.4" width="1" height="5.6" fill="#50508f"/><rect x="99" y="45.5" width="1" height="10.5" fill="#50508f"/><rect x="100" y="48.6" width="1" height="7.4" fill="#50508f"/><rect x="101" y="47.5" width="1" height="8.5" fill="#50508f"/><rect x="102" y="40.9" width="1" height="15.1" fill="#50508f"/><rect x="103" y="47.0" width="1" height="9.0" fill="#50508f"/><rect x="104" y="45.8" width="1" height="10.2" fill="#50508f"/><rect x="105" y="42.0" width="1" height="14.0" fill="#50508f"/><rect x="106" y="51.2" width="1" height="4.8" fill="#50508f"/><rect x="107" y="51.7" width="1" height="4.3" fill="#50508f"/><rect x="108" y="41.5" width="1" height="14.5" fill="#50508f"/><rect x="109" y="42.7" width="1" height="13.3" fill="#50508f"/><rect x="110" y="50.3" width="1" height="5.7" fill="#50508f"/><rect x="111" y="51.1" width="1" height="4.9" fill="#50508f"/><rect x="112" y="43.7" width="1" height="12.3" fill="#50508f"/><rect x="113" y="41.1" width="1" height="14.9" fill="#50508f"/><rect x="114" y="51.0" width="1" height="5.0" fill="#50508f"/><rect x="115" y="41.0" width="1" height="15.0" fill="#50508f"/><rect x="116" y="41.8" width="1" height="14.2" fill="#50508f"/><rect x="117" y="45.4" width="1" height="10.6" fill="#50508f"/><rect x="118" y="47.9" width="1" height="8.1" fill="#50508f"/><rect x="119" y="52.4" width="1" height="3.6" fill="#50508f"/><rect x="120" y="53.5" width="1" height="2.5" fill="#50508f"/><rect x="121" y="40.8" width="1" height="15.2" fill="#50508f"/><rect x="122" y="50.4" width="1" height="5.6" fill="#50508f"/><rect x="123" y="44.1" width="1" height="11.9" fill="#50508f"/><rect x="124" y="50.2" width="1" height="5.8" fill="#50508f"/><rect x="125" y="42.6" width="1" height="13.4" fill="#50508f"/><rect x="126" y="45.5" width="1" height="10.5" fill="#50508f"/><rect x="127" y="49.7" width="1" height="6.3" fill="#50508f"/><rect x="128" y="51.3" width="1" height="4.7" fill="#50508f"/><rect x="129" y="43.9" width="1" height="12.1" fill="#50508f"/><rect x="130" y="53.0" width="1" height="3.0" fill="#50508f"/><rect x="131" y="50.6" width="1" height="5.4" fill="#50508f"/><rect x="132" y="46.0" width="1" height="10.0" fill="#50508f"/><rect x="133" y="42.2" width="1" height="13.8" fill="#50508f"/><rect x="134" y="45.3" width="1" height="10.7" fill="#50508f"/><rect x="135" y="49.8" width="1" height="6.2" fill="#50508f"/><rect x="136" y="41.4" width="1" height="14.6" fill="#50508f"/><rect x="137" y="50.9" width="1" height="5.1" fill="#50508f"/><rect x="138" y="53.9" width="1" height="2.1" fill="#50508f"/><rect x="139" y="50.0" width="1" height="6.0" fill="#50508f"/><rect x="140" y="47.6" width="1" height="8.4" fill="#50508f"/><rect x="141" y="53.1" width="1" height="2.9" fill="#50508f"/><rect x="142" y="51.3" width="1" height="4.7" fill="#50508f"/><rect x="143" y="48.6" width="1" height="7.4" fill="#50508f"/><rect x="144" y="45.9" width="1" height="10.1" fill="#50508f"/><rect x="145" y="52.0" width="1" height="4.0" fill="#50508f"/><rect x="146" y="48.7" width="1" height="7.3" fill="#50508f"/><rect x="147" y="41.7" width="1" height="14.3" fill="#50508f"/><rect x="148" y="40.6" width="1" height="15.4" fill="#50508f"/><rect x="149" y="48.7" width="1" height="7.3" fill="#50508f"/><rect x="150" y="48.4" width="1" height="7.6" fill="#50508f"/><rect x="151" y="49.2" width="1" height="6.8" fill="#50508f"/><rect x="152" y="52.9" width="1" height="3.1" fill="#50508f"/><rect x="153" y="53.8" width="1" height="2.2" fill="#50508f"/><rect x="154" y="54.0" width="1" height="2.0" fill="#50508f"/><rect x="155" y="46.8" width="1" height="9.2" fill="#50508f"/><rect x="156" y="48.3" width="1" height="7.7" fill="#50508f"/><rect x="157" y="46.4" width="1" height="9.6" fill="#50508f"/><rect x="158" y="54.0" width="1" height="2.0" fill="#50508f"/><rect x="159" y="48.8" width="1" height="7.2" fill="#50508f"/><rect x="160" y="50.0" width="1" height="6.0" fill="#50508f"/><rect x="161" y="48.1" width="1" height="7.9" fill="#50508f"/><rect x="162" y="51.4" width="1" height="4.6" fill="#50508f"/><rect x="163" y="46.1" width="1" height="9.9" fill="#50508f"/><rect x="164" y="53.4" width="1" height="2.6" fill="#50508f"/><rect x="165" y="50.2" width="1" height="5.8" fill="#50508f"/><rect x="166" y="48.2" width="1" height="7.8" fill="#50508f"/><rect x="167" y="46.0" width="1" height="10.0" fill="#50508f"/><rect x="168" y="46.6" width="1" height="9.4" fill="#50508f"/><rect x="169" y="46.2" width="1" height="9.8" fill="#50508f"/><rect x="170" y="44.5" width="1" height="11.5" fill="#50508f"/><rect x="171" y="42.3" width="1" height="13.7" fill="#50508f"/><rect x="172" y="48.9" width="1" height="7.1" fill="#50508f"/><rect x="173" y="43.9" width="1" height="12.1" fill="#50508f"/><rect x="174" y="40.3" width="1" height="15.7" fill="#50508f"/><rect x="175" y="40.1" width="1" height="15.9" fill="#50508f"/><rect x="176" y="46.7" width="1" height="9.3" fill="#50508f"/><rect x="177" y="40.4" width="1" height="15.6" fill="#50508f"/><rect x="178" y="38.9" width="1" height="17.1" fill="#50508f"/><rect x="179" y="43.4" width="1" height="12.6" fill="#50508f"/><rect x="180" y="42.3" width="1" height="13.7" fill="#50508f"/><rect x="181" y="46.5" width="1" height="9.5" fill="#50508f"/><rect x="182" y="42.9" width="1" height="13.1" fill="#50508f"/><rect x="183" y="42.4" width="1" height="13.6" fill="#50508f"/><rect x="184" y="52.3" width="1" height="3.7" fill="#50508f"/><rect x="185" y="42.1" width="1" height="13.9" fill="#50508f"/><rect x="186" y="36.4" width="1" height="19.6" fill="#50508f"/><rect x="187" y="38.6" width="1" height="17.4" fill="#50508f"/><rect x="188" y="41.4" width="1" height="14.6" fill="#50508f"/><rect x="189" y="47.2" width="1" height="8.8" fill="#50508f"/><rect x="190" y="42.1" width="1" height="13.9" fill="#50508f"/><rect x="191" y="44.9" width="1" height="11.1" fill="#50508f"/><rect x="192" y="47.3" width="1" height="8.7" fill="#50508f"/><rect x="193" y="42.5" width="1" height="13.5" fill="#50508f"/><rect x="194" y="52.8" width="1" height="3.2" fill="#50508f"/><rect x="195" y="45.0" width="1" height="11.0" fill="#50508f"/><rect x="196" y="53.7" width="1" height="2.3" fill="#50508f"/><rect x="197" y="47.9" width="1" height="8.1" fill="#50508f"/><rect x="198" y="49.6" width="1" height="6.4" fill="#50508f"/><rect x="199" y="52.1" width="1" height="3.9" fill="#50508f"/><rect x="200" y="54.2" width="1" height="1.8" fill="#50508f"/><rect x="201" y="54.4" width="1" height="1.6" fill="#50508f"/><rect x="202" y="54.3" width="1" height="1.7" fill="#50508f"/><rect x="203" y="54.1" width="1" height="1.9" fill="#50508f"/><rect x="204" y="54.6" width="1" height="1.4" fill="#50508f"/><rect x="205" y="54.8" width="1" height="1.2" fill="#50508f"/><rect x="206" y="54.6" width="1" height="1.4" fill="#50508f"/><rect x="207" y="54.3" width="1" height="1.7" fill="#50508f"/><rect x="208" y="54.6" width="1" height="1.4" fill="#50508f"/><rect x="209" y="54.7" width="1" height="1.3" fill="#50508f"/><rect x="210" y="54.1" width="1" height="1.9" fill="#50508f"/><rect x="211" y="54.3" width="1" height="1.7" fill="#50508f"/><rect x="212" y="54.4" width="1" height="1.6" fill="#50508f"/><rect x="213" y="54.1" width="1" height="1.9" fill="#50508f"/><rect x="214" y="54.5" width="1" height="1.5" fill="#50508f"/><rect x="215" y="54.3" width="1" height="1.7" fill="#50508f"/><rect x="216" y="54.6" width="1" height="1.4" fill="#50508f"/><rect x="217" y="54.5" width="1" height="1.5" fill="#50508f"/><rect x="218" y="54.2" width="1" height="1.8" fill="#50508f"/><rect x="219" y="54.1" width="1" height="1.9" fill="#50508f"/><rect x="220" y="54.1" width="1" height="1.9" fill="#50508f"/><rect x="200" y="54" width="21" height="2" fill="#2a5f8f"/></svg>
<div style="left:154px;top:566px;width:3px;height:20px;"></div>
<svg style="left:153px;top:566px;" width="4" height="22" viewBox="0 0 4 22"><rect x="1.2" y="1" width="1.3" height="1.3" fill="#6c7074"/><rect x="1.2" y="4" width="1.3" height="1.3" fill="#6c7074"/><rect x="1.2" y="7" width="1.3" height="1.3" fill="#6c7074"/><rect x="1.2" y="10" width="1.3" height="1.3" fill="#6c7074"/><rect x="1.2" y="13" width="1.3" height="1.3" fill="#6c7074"/><rect x="1.2" y="16" width="1.3" height="1.3" fill="#6c7074"/><rect x="1.2" y="19" width="1.3" height="1.3" fill="#6c7074"/></svg>
<div style="left:218px;top:618px;width:183px;height:57px;background:#d5d8a2;border:2px solid #f80c10"></div>
<svg style="left:220px;top:620px;" width="179" height="53" viewBox="0 0 179 53"><rect x="4" y="51.6" width="1" height="1.4" fill="#7b7bb0"/><rect x="5" y="51.6" width="1" height="1.4" fill="#7b7bb0"/><rect x="6" y="51.5" width="1" height="1.5" fill="#7b7bb0"/><rect x="7" y="51.4" width="1" height="1.6" fill="#7b7bb0"/><rect x="8" y="51.6" width="1" height="1.4" fill="#7b7bb0"/><rect x="9" y="51.4" width="1" height="1.6" fill="#7b7bb0"/><rect x="10" y="52.0" width="1" height="1.0" fill="#7b7bb0"/><rect x="11" y="51.7" width="1" height="1.3" fill="#7b7bb0"/><rect x="12" y="51.4" width="1" height="1.6" fill="#7b7bb0"/><rect x="13" y="51.6" width="1" height="1.4" fill="#7b7bb0"/><rect x="14" y="51.5" width="1" height="1.5" fill="#7b7bb0"/><rect x="15" y="52.0" width="1" height="1.0" fill="#7b7bb0"/><rect x="16" y="51.7" width="1" height="1.3" fill="#7b7bb0"/><rect x="17" y="51.9" width="1" height="1.1" fill="#7b7bb0"/><rect x="18" y="51.7" width="1" height="1.3" fill="#7b7bb0"/><rect x="19" y="51.7" width="1" height="1.3" fill="#7b7bb0"/><rect x="20" y="52.0" width="1" height="1.0" fill="#7b7bb0"/><rect x="21" y="51.9" width="1" height="1.1" fill="#7b7bb0"/><rect x="22" y="51.9" width="1" height="1.1" fill="#7b7bb0"/><rect x="23" y="51.5" width="1" height="1.5" fill="#7b7bb0"/><rect x="24" y="51.5" width="1" height="1.5" fill="#7b7bb0"/><rect x="25" y="51.9" width="1" height="1.1" fill="#7b7bb0"/><rect x="26" y="51.5" width="1" height="1.5" fill="#7b7bb0"/><rect x="27" y="52.0" width="1" height="1.0" fill="#7b7bb0"/><rect x="28" y="51.6" width="1" height="1.4" fill="#7b7bb0"/><rect x="29" y="52.0" width="1" height="1.0" fill="#7b7bb0"/><rect x="30" y="52.0" width="1" height="1.0" fill="#7b7bb0"/><rect x="31" y="51.5" width="1" height="1.5" fill="#7b7bb0"/><rect x="32" y="51.9" width="1" height="1.1" fill="#7b7bb0"/><rect x="33" y="51.9" width="1" height="1.1" fill="#7b7bb0"/><rect x="34" y="51.4" width="1" height="1.6" fill="#7b7bb0"/><rect x="35" y="51.5" width="1" height="1.5" fill="#7b7bb0"/><rect x="36" y="51.9" width="1" height="1.1" fill="#7b7bb0"/><rect x="37" y="51.4" width="1" height="1.6" fill="#7b7bb0"/><rect x="38" y="51.7" width="1" height="1.3" fill="#7b7bb0"/><rect x="39" y="51.6" width="1" height="1.4" fill="#7b7bb0"/><rect x="40" y="51.9" width="1" height="1.1" fill="#7b7bb0"/><rect x="41" y="51.4" width="1" height="1.6" fill="#7b7bb0"/><rect x="42" y="51.6" width="1" height="1.4" fill="#7b7bb0"/><rect x="43" y="51.4" width="1" height="1.6" fill="#7b7bb0"/><rect x="44" y="51.5" width="1" height="1.5" fill="#7b7bb0"/><rect x="45" y="51.8" width="1" height="1.2" fill="#7b7bb0"/><rect x="46" y="51.8" width="1" height="1.2" fill="#7b7bb0"/><rect x="47" y="51.9" width="1" height="1.1" fill="#7b7bb0"/><rect x="48" y="51.9" width="1" height="1.1" fill="#7b7bb0"/><rect x="49" y="52.0" width="1" height="1.0" fill="#7b7bb0"/><rect x="50" y="51.8" width="1" height="1.2" fill="#7b7bb0"/><rect x="51" y="51.7" width="1" height="1.3" fill="#7b7bb0"/><rect x="52" y="52.0" width="1" height="1.0" fill="#7b7bb0"/><rect x="53" y="51.6" width="1" height="1.4" fill="#7b7bb0"/><rect x="54" y="51.8" width="1" height="1.2" fill="#7b7bb0"/><rect x="55" y="51.8" width="1" height="1.2" fill="#7b7bb0"/><rect x="56" y="51.5" width="1" height="1.5" fill="#7b7bb0"/><rect x="57" y="51.7" width="1" height="1.3" fill="#7b7bb0"/><rect x="58" y="51.8" width="1" height="1.2" fill="#7b7bb0"/><rect x="59" y="51.7" width="1" height="1.3" fill="#7b7bb0"/><rect x="60" y="51.6" width="1" height="1.4" fill="#7b7bb0"/><rect x="61" y="52.0" width="1" height="1.0" fill="#7b7bb0"/><rect x="62" y="51.4" width="1" height="1.6" fill="#7b7bb0"/><rect x="63" y="52.0" width="1" height="1.0" fill="#7b7bb0"/><rect x="64" y="51.6" width="1" height="1.4" fill="#7b7bb0"/><rect x="65" y="51.5" width="1" height="1.5" fill="#7b7bb0"/><rect x="66" y="52.0" width="1" height="1.0" fill="#7b7bb0"/><rect x="67" y="51.5" width="1" height="1.5" fill="#7b7bb0"/><rect x="68" y="51.8" width="1" height="1.2" fill="#7b7bb0"/><rect x="69" y="51.7" width="1" height="1.3" fill="#7b7bb0"/><rect x="70" y="52.0" width="1" height="1.0" fill="#7b7bb0"/><rect x="71" y="52.0" width="1" height="1.0" fill="#7b7bb0"/><rect x="72" y="51.9" width="1" height="1.1" fill="#7b7bb0"/><rect x="73" y="51.4" width="1" height="1.6" fill="#7b7bb0"/><rect x="74" y="51.9" width="1" height="1.1" fill="#7b7bb0"/><rect x="75" y="51.6" width="1" height="1.4" fill="#7b7bb0"/><rect x="76" y="51.4" width="1" height="1.6" fill="#7b7bb0"/><rect x="77" y="51.4" width="1" height="1.6" fill="#7b7bb0"/><rect x="78" y="51.8" width="1" height="1.2" fill="#7b7bb0"/><rect x="79" y="51.8" width="1" height="1.2" fill="#7b7bb0"/><rect x="80" y="51.7" width="1" height="1.3" fill="#7b7bb0"/><rect x="81" y="51.5" width="1" height="1.5" fill="#7b7bb0"/><rect x="82" y="52.0" width="1" height="1.0" fill="#7b7bb0"/><rect x="83" y="51.6" width="1" height="1.4" fill="#7b7bb0"/><rect x="84" y="51.5" width="1" height="1.5" fill="#7b7bb0"/><rect x="85" y="51.5" width="1" height="1.5" fill="#7b7bb0"/><rect x="86" y="52.0" width="1" height="1.0" fill="#7b7bb0"/><rect x="87" y="51.4" width="1" height="1.6" fill="#7b7bb0"/><rect x="88" y="52.0" width="1" height="1.0" fill="#7b7bb0"/><rect x="89" y="51.8" width="1" height="1.2" fill="#7b7bb0"/><rect x="90" y="51.6" width="1" height="1.4" fill="#7b7bb0"/><rect x="91" y="51.5" width="1" height="1.5" fill="#7b7bb0"/><rect x="92" y="51.8" width="1" height="1.2" fill="#7b7bb0"/><rect x="93" y="51.4" width="1" height="1.6" fill="#7b7bb0"/><rect x="94" y="51.7" width="1" height="1.3" fill="#7b7bb0"/><rect x="95" y="51.8" width="1" height="1.2" fill="#7b7bb0"/><rect x="96" y="51.8" width="1" height="1.2" fill="#7b7bb0"/><rect x="97" y="51.9" width="1" height="1.1" fill="#7b7bb0"/><rect x="98" y="52.0" width="1" height="1.0" fill="#7b7bb0"/><rect x="99" y="51.9" width="1" height="1.1" fill="#7b7bb0"/><rect x="100" y="51.6" width="1" height="1.4" fill="#7b7bb0"/><rect x="101" y="51.4" width="1" height="1.6" fill="#7b7bb0"/><rect x="102" y="51.9" width="1" height="1.1" fill="#7b7bb0"/><rect x="103" y="52.0" width="1" height="1.0" fill="#7b7bb0"/><rect x="104" y="51.4" width="1" height="1.6" fill="#7b7bb0"/><rect x="105" y="51.7" width="1" height="1.3" fill="#7b7bb0"/><rect x="106" y="51.8" width="1" height="1.2" fill="#7b7bb0"/><rect x="107" y="51.9" width="1" height="1.1" fill="#7b7bb0"/><rect x="108" y="51.7" width="1" height="1.3" fill="#7b7bb0"/><rect x="109" y="51.5" width="1" height="1.5" fill="#7b7bb0"/><rect x="110" y="51.7" width="1" height="1.3" fill="#7b7bb0"/><rect x="111" y="51.8" width="1" height="1.2" fill="#7b7bb0"/><rect x="112" y="52.0" width="1" height="1.0" fill="#7b7bb0"/><rect x="113" y="51.5" width="1" height="1.5" fill="#7b7bb0"/><rect x="114" y="52.0" width="1" height="1.0" fill="#7b7bb0"/><rect x="115" y="51.7" width="1" height="1.3" fill="#7b7bb0"/><rect x="116" y="51.5" width="1" height="1.5" fill="#7b7bb0"/><rect x="117" y="52.0" width="1" height="1.0" fill="#7b7bb0"/><rect x="118" y="51.6" width="1" height="1.4" fill="#7b7bb0"/><rect x="119" y="51.4" width="1" height="1.6" fill="#7b7bb0"/><rect x="120" y="51.6" width="1" height="1.4" fill="#7b7bb0"/><rect x="121" y="51.5" width="1" height="1.5" fill="#7b7bb0"/><rect x="122" y="52.0" width="1" height="1.0" fill="#7b7bb0"/><rect x="123" y="51.8" width="1" height="1.2" fill="#7b7bb0"/><rect x="124" y="51.9" width="1" height="1.1" fill="#7b7bb0"/><rect x="125" y="51.5" width="1" height="1.5" fill="#7b7bb0"/><rect x="126" y="51.9" width="1" height="1.1" fill="#7b7bb0"/><rect x="127" y="51.7" width="1" height="1.3" fill="#7b7bb0"/><rect x="128" y="51.4" width="1" height="1.6" fill="#7b7bb0"/><rect x="129" y="51.5" width="1" height="1.5" fill="#7b7bb0"/><rect x="130" y="51.4" width="1" height="1.6" fill="#7b7bb0"/><rect x="131" y="51.7" width="1" height="1.3" fill="#7b7bb0"/><rect x="132" y="51.7" width="1" height="1.3" fill="#7b7bb0"/><rect x="133" y="51.6" width="1" height="1.4" fill="#7b7bb0"/><rect x="134" y="51.7" width="1" height="1.3" fill="#7b7bb0"/><rect x="135" y="51.9" width="1" height="1.1" fill="#7b7bb0"/><rect x="136" y="51.8" width="1" height="1.2" fill="#7b7bb0"/><rect x="137" y="51.9" width="1" height="1.1" fill="#7b7bb0"/><rect x="138" y="51.8" width="1" height="1.2" fill="#7b7bb0"/><rect x="139" y="51.4" width="1" height="1.6" fill="#7b7bb0"/><rect x="140" y="51.4" width="1" height="1.6" fill="#7b7bb0"/><rect x="141" y="51.6" width="1" height="1.4" fill="#7b7bb0"/><rect x="142" y="51.7" width="1" height="1.3" fill="#7b7bb0"/><rect x="143" y="51.8" width="1" height="1.2" fill="#7b7bb0"/><rect x="144" y="52.0" width="1" height="1.0" fill="#7b7bb0"/><rect x="145" y="51.9" width="1" height="1.1" fill="#6f6fad"/><rect x="146" y="44.3" width="1" height="8.7" fill="#6f6fad"/><rect x="147" y="36.1" width="1" height="16.9" fill="#6f6fad"/><rect x="148" y="34.7" width="1" height="18.3" fill="#6f6fad"/><rect x="149" y="29.1" width="1" height="23.9" fill="#6f6fad"/><rect x="150" y="28.7" width="1" height="24.3" fill="#6f6fad"/><rect x="151" y="29.4" width="1" height="23.6" fill="#6f6fad"/><rect x="152" y="29.3" width="1" height="23.7" fill="#6f6fad"/><rect x="153" y="27.2" width="1" height="25.8" fill="#6f6fad"/><rect x="154" y="32.0" width="1" height="21.0" fill="#6f6fad"/><rect x="155" y="27.2" width="1" height="25.8" fill="#6f6fad"/><rect x="156" y="31.8" width="1" height="21.2" fill="#6f6fad"/><rect x="157" y="29.5" width="1" height="23.5" fill="#6f6fad"/><rect x="158" y="24.7" width="1" height="28.3" fill="#6f6fad"/><rect x="159" y="25.8" width="1" height="27.2" fill="#6f6fad"/><rect x="160" y="30.6" width="1" height="22.4" fill="#6f6fad"/><rect x="161" y="19.9" width="1" height="33.1" fill="#6f6fad"/><rect x="162" y="25.8" width="1" height="27.2" fill="#6f6fad"/><rect x="163" y="26.8" width="1" height="26.2" fill="#6f6fad"/><rect x="164" y="31.2" width="1" height="21.8" fill="#6f6fad"/><rect x="165" y="27.3" width="1" height="25.7" fill="#6f6fad"/><rect x="166" y="30.4" width="1" height="22.6" fill="#6f6fad"/><rect x="167" y="25.4" width="1" height="27.6" fill="#6f6fad"/><rect x="168" y="28.7" width="1" height="24.3" fill="#6f6fad"/><rect x="169" y="23.1" width="1" height="29.9" fill="#6f6fad"/><rect x="170" y="26.5" width="1" height="26.5" fill="#6f6fad"/><rect x="171" y="24.1" width="1" height="28.9" fill="#6f6fad"/><rect x="172" y="30.9" width="1" height="22.1" fill="#6f6fad"/><rect x="173" y="27.7" width="1" height="25.3" fill="#6f6fad"/><rect x="174" y="26.6" width="1" height="26.4" fill="#6f6fad"/><rect x="175" y="25.4" width="1" height="27.6" fill="#6f6fad"/><rect x="176" y="32.5" width="1" height="20.5" fill="#6f6fad"/><rect x="177" y="26.3" width="1" height="26.7" fill="#6f6fad"/><rect x="178" y="26.4" width="1" height="26.6" fill="#6f6fad"/></svg>
<div style="left:306px;top:619px;width:94px;height:13px;background:#f80c10;"></div>
<span style="left:306.8px;top:621.27px;font-size:11.5px;color:#ffffff;letter-spacing:-0.261px;">Softpedia test.mp3</span>
<div style="left:367px;top:447px;width:1px;height:274px;background:#ffffff;"></div>
<div style="left:1465px;top:447px;width:14px;height:274px;background:#33383d;"></div>
<div style="left:1466px;top:461px;width:12px;height:236px;background:#474c50;border:1px solid #575b5f"></div>
<div style="left:1466px;top:698px;width:12px;height:9px;background:#3e4347;border:1px solid #33373b"></div>
<div style="left:1466px;top:448px;width:12px;height:13px;background:#41464b;border:1px solid #575b5f"></div>
<svg style="left:1467px;top:451px;" width="10" height="7" viewBox="0 0 10 7"><path d="M0.800 5.600h8.400l-4.200-4.600z" fill="#c9cbcc"/></svg>
<div style="left:1466px;top:708px;width:12px;height:13px;background:#41464b;border:1px solid #5a5f63"></div>
<svg style="left:1467px;top:712px;" width="10" height="7" viewBox="0 0 10 7"><path d="M0.800 0.800h8.400l-4.200 4.600z" fill="#c9cbcc"/></svg>
<svg style="left:1128px;top:729px;" width="16" height="16" viewBox="0 0 16 16"><rect x="2" y="1.500" width="11.500" height="7.500" fill="#8f9396" stroke="#eff0f1" stroke-width="1"/><rect x="4.500" y="3.300" width="6.500" height="3.900" fill="#b8bbbd"/><path d="M2 11.700h12" stroke="#eff0f1" stroke-width="1"/><path d="M4 9.700l1.800 2-1.800 2-1.800-2zM8 9.700l1.800 2-1.800 2-1.800-2zM12 9.700l1.800 2-1.800 2-1.800-2z" fill="#eff0f1"/></svg>
<div style="left:1150px;top:727px;width:22px;height:22px;background:#3a3f44;border:1px solid #50555a;border-radius:3px"></div>
<svg style="left:1153px;top:730px;" width="16" height="16" viewBox="0 0 16 16"><g fill="none" stroke="#c9cbcc" stroke-width="1"><rect x="4.500" y="6.500" width="7" height="4"/><path d="M5.500 6.500V4.500h5v2M1.500 8.500h1.500M13 8.500h1.500"/></g></svg>
<div style="left:1175px;top:727px;width:22px;height:22px;background:#3a3f44;border:1px solid #50555a;border-radius:3px"></div>
<svg style="left:1178px;top:729px;" width="16" height="16" viewBox="0 0 16 16"><g fill="none" stroke="#eff0f1"><rect x="2.300" y="2.600" width="11.400" height="10.800" stroke-width="1.300"/><path d="M4.600 2.600v10.800M11.400 2.600v10.800" stroke-width="1"/><path d="M4.600 8h6.800" stroke-width="2"/></g></svg>
<div style="left:1200px;top:727px;width:22px;height:22px;background:#3a3f44;border:1px solid #50555a;border-radius:3px"></div>
<svg style="left:1203px;top:730px;" width="16" height="16" viewBox="0 0 16 16"><path d="M0.500 8l2.700-3 2.700 3-2.700 3zM6.500 8l3.600-5.600 3.600 5.600-3.600 5.600z" fill="#eff0f1"/><path d="M0 8h15.500" stroke="#eff0f1" stroke-width="1"/></svg>
<svg style="left:1228px;top:729px;" width="16" height="16" viewBox="0 0 16 16"><path d="M2.200 2v12" stroke="#eff0f1" stroke-width="1.400"/><path d="M2.200 2.200l11.300 3.700-11.300 3.700z" fill="#eff0f1"/></svg>
<div style="left:1250px;top:727px;width:22px;height:22px;background:#3a3f44;border:1px solid #50555a;border-radius:3px"></div>
<svg style="left:1251px;top:729px;" width="18" height="16" viewBox="0 0 18 16"><path d="M5.500 1.500v13.500" stroke="#eff0f1" stroke-width="1.400"/><rect x="9" y="6.800" width="7" height="2.400" fill="#eff0f1"/><rect x="1.500" y="7.300" width="2" height="1.400" fill="#eff0f1"/><rect x="7" y="7.300" width="1.300" height="1.400" fill="#eff0f1"/></svg>
<svg style="left:1285px;top:729px;" width="16" height="16" viewBox="0 0 16 16"><g fill="none" stroke="#eff0f1" stroke-width="1.200"><path d="M2.600 5v-2.400h2.400M11 2.600h2.400v2.400M13.400 11v2.400h-2.400M5 13.400H2.600v-2.400M7.200 2.600h1.600M7.200 13.400h1.600M2.600 7.200v1.600M13.400 7.200v1.600"/><rect x="5.500" y="5.500" width="5" height="5"/></g></svg>
<svg style="left:1310px;top:729px;" width="16" height="16" viewBox="0 0 16 16"><g fill="none" stroke="#eff0f1" stroke-width="1.200"><path d="M2.300 8.500V2.600h11.100v10.800H7.500"/><rect x="2.300" y="10.200" width="3.200" height="3.200"/><path d="M11.500 4.500L7.500 8.500M7.500 5.500v3h3"/></g></svg>
<div style="left:1333px;top:736px;width:96px;height:3px;background:#25282c;border-radius:1.500px"></div>
<div style="left:1383px;top:736px;width:46px;height:3px;background:#3daee9;border-radius:1.500px"></div>
<div style="left:1372px;top:732px;width:11px;height:11px;background:#54595e;border:1px solid #6e7276;border-radius:2.500px"></div>
<svg style="left:1436px;top:729px;" width="16" height="16" viewBox="0 0 16 16"><g fill="none" stroke="#eff0f1" stroke-width="1.200"><path d="M2.600 5v-2.400h2.400M7.200 2.600h1.300M13.400 8.500v1.500M13.400 11.500v1.900h-2.400M7.500 13.400h1.800M2.600 7v1.600"/><rect x="2.600" y="10.200" width="3.200" height="3.200"/><path d="M7.500 8.500l5.500-5.500M10 2.600h3.400v3.400"/></g></svg>
<svg style="left:1468px;top:738.4px;" width="12" height="12" viewBox="0 0 12 12"><rect x="9" y="1" width="1.900" height="1.900" fill="#83878a"/><rect x="6" y="4" width="1.900" height="1.900" fill="#83878a"/><rect x="9" y="4" width="1.900" height="1.900" fill="#83878a"/><rect x="3" y="7" width="1.900" height="1.900" fill="#83878a"/><rect x="6" y="7" width="1.900" height="1.900" fill="#83878a"/><rect x="9" y="7" width="1.900" height="1.900" fill="#83878a"/><rect x="0" y="10" width="1.900" height="1.900" fill="#83878a"/><rect x="3" y="10" width="1.900" height="1.900" fill="#83878a"/><rect x="6" y="10" width="1.900" height="1.900" fill="#83878a"/><rect x="9" y="10" width="1.900" height="1.900" fill="#83878a"/></svg>
<div style="left:196px;top:51px;width:340px;height:535px;background:#232629;box-shadow:1px 1px 3px rgba(0,0,0,.5);border:1px solid #1c1f21;border-top:none"></div>
<span style="left:223.3px;top:56.84px;font-size:12px;color:#eff0f1;letter-spacing:-0.196px;"><u>S</u>election</span>
<svg style="left:524.5px;top:58px;" width="7" height="9" viewBox="0 0 7 9"><path d="M0.500 0.500v8l5-4z" fill="#c9cbcc"/></svg>
<span style="left:223.3px;top:79.84px;font-size:12px;color:#eff0f1;letter-spacing:-0.069px;"><u>I</u>nsertion</span>
<svg style="left:524.5px;top:81px;" width="7" height="9" viewBox="0 0 7 9"><path d="M0.500 0.500v8l5-4z" fill="#c9cbcc"/></svg>
<span style="left:223.3px;top:102.84px;font-size:12px;color:#eff0f1;letter-spacing:-0.235px;"><u>R</u>emoval</span>
<svg style="left:524.5px;top:104px;" width="7" height="9" viewBox="0 0 7 9"><path d="M0.500 0.500v8l5-4z" fill="#c9cbcc"/></svg>
<div style="left:196px;top:120px;width:338px;height:23px;background:#3daee9;"></div>
<span style="left:223.3px;top:125.84px;font-size:12px;color:#eff0f1;letter-spacing:-0.088px;"><u>T</u>imeline Preview</span>
<svg style="left:524.5px;top:127px;" width="7" height="9" viewBox="0 0 7 9"><path d="M0.500 0.500v8l5-4z" fill="#eff0f1"/></svg>
<span style="left:223.3px;top:148.84px;font-size:12px;color:#eff0f1;letter-spacing:-0.384px;">Resize Item Start</span>
<span style="left:223.3px;top:171.84px;font-size:12px;color:#eff0f1;letter-spacing:-0.463px;">Resize Item End</span>
<span style="left:223.3px;top:194.84px;font-size:12px;color:#eff0f1;letter-spacing:0.004px;"><u>C</u>urrent clip</span>
<svg style="left:524.5px;top:196px;" width="7" height="9" viewBox="0 0 7 9"><path d="M0.500 0.500v8l5-4z" fill="#c9cbcc"/></svg>
<span style="left:223.3px;top:217.84px;font-size:12px;color:#eff0f1;letter-spacing:-0.420px;"><u>G</u>uides</span>
<svg style="left:524.5px;top:219px;" width="7" height="9" viewBox="0 0 7 9"><path d="M0.500 0.500v8l5-4z" fill="#c9cbcc"/></svg>
<span style="left:223.3px;top:240.84px;font-size:12px;color:#eff0f1;letter-spacing:-0.665px;">S<u>p</u>ace</span>
<svg style="left:524.5px;top:242px;" width="7" height="9" viewBox="0 0 7 9"><path d="M0.500 0.500v8l5-4z" fill="#c9cbcc"/></svg>
<svg style="left:203px;top:262.5px;" width="14" height="14" viewBox="0 0 15 15"><rect x="1.600" y="1.600" width="11.800" height="11.800" fill="none" stroke="#eff0f1" stroke-width="1.200"/><g fill="#eff0f1"><circle cx="5.300" cy="5.300" r="1.600"/><rect x="8.400" y="4" width="2.600" height="2.600"/><rect x="4" y="8.400" width="2.600" height="2.600"/><path d="M8.100 11.200h3.200l-1.600-3z"/></g></svg>
<span style="left:223.3px;top:263.84px;font-size:12px;color:#eff0f1;letter-spacing:-0.178px;">Group Cl<u>i</u>ps</span>
<span style="left:453.2px;top:263.84px;font-size:12px;color:#eff0f1;letter-spacing:-0.067px;">Ctrl+G</span>
<svg style="left:203px;top:285.5px;" width="14" height="14" viewBox="0 0 15 15"><g fill="none" stroke="#6e7275" stroke-width="1.200"><path d="M1.600 4.500v-2.900h2.900M10.500 1.600h2.900v2.900M13.400 10.500v2.900h-2.900M4.500 13.400H1.600v-2.900"/></g><g fill="#6e7275"><circle cx="5.300" cy="5.300" r="1.600"/><rect x="8.400" y="4" width="2.600" height="2.600"/><rect x="4" y="8.400" width="2.600" height="2.600"/><path d="M8.100 11.200h3.200l-1.600-3z"/></g></svg>
<span style="left:223.3px;top:286.84px;font-size:12px;color:#6e7275;letter-spacing:-0.026px;"><u>U</u>ngroup Clips</span>
<span style="left:453.2px;top:286.84px;font-size:12px;color:#6e7275;letter-spacing:0.056px;">Ctrl+Shift+G</span>
<svg style="left:203px;top:308.5px;" width="14" height="14" viewBox="0 0 15 15"><g fill="none" stroke="#eff0f1" stroke-width="1.200"><path d="M1.600 1.600h9.400l2.400 2.400v9.400H1.600z"/><path d="M4.300 1.800v3.600h5.600V1.800M4 13.200V8.600h7v4.600"/></g></svg>
<span style="left:223.3px;top:309.84px;font-size:12px;color:#eff0f1;letter-spacing:-0.396px;">Save Selection</span>
<svg style="left:203px;top:331.5px;" width="14" height="14" viewBox="0 0 15 15"><path d="M3.600 1.600h7.800v11.800l-3.900-2.600-3.900 2.600z" fill="none" stroke="#eff0f1" stroke-width="1.200"/></svg>
<span style="left:223.3px;top:332.84px;font-size:12px;color:#eff0f1;letter-spacing:-0.031px;"><u>A</u>dd Timeline Selection to Library</span>
<span style="left:223.3px;top:355.84px;font-size:12px;color:#eff0f1;letter-spacing:-0.492px;">Trac<u>k</u>s</span>
<svg style="left:524.5px;top:357px;" width="7" height="9" viewBox="0 0 7 9"><path d="M0.500 0.500v8l5-4z" fill="#c9cbcc"/></svg>
<div style="left:203px;top:374px;width:326px;height:1px;background:#303438;"></div>
<span style="left:223.3px;top:381.34px;font-size:12px;color:#eff0f1;letter-spacing:-0.065px;">Add <u>E</u>ffect</span>
<svg style="left:524.5px;top:382.5px;" width="7" height="9" viewBox="0 0 7 9"><path d="M0.500 0.500v8l5-4z" fill="#c9cbcc"/></svg>
<svg style="left:203px;top:403.0px;" width="14" height="14" viewBox="0 0 15 15"><path d="M7.500 0.800l2 4.700 5 .5-3.800 3.300 1.200 5L7.500 11.600 3.100 14.300l1.200-5L.5 6l5-.5z" fill="#eff0f1"/></svg>
<span style="left:223.3px;top:404.34px;font-size:12px;color:#eff0f1;letter-spacing:-0.139px;"><u>D</u>isable Timeline Effects</span>
<div style="left:203px;top:422px;width:326px;height:1px;background:#303438;"></div>
<div style="left:201px;top:424.5px;width:18px;height:21px;background:#34393d;border:1px solid #44494d;border-radius:3px"></div>
<svg style="left:203px;top:428.0px;" width="14" height="14" viewBox="0 0 15 15"><g fill="none" stroke="#eff0f1"><rect x="1.600" y="1.600" width="11.800" height="11.800" stroke-width="1.300"/><path d="M4 1.600v11.800M11 1.600v11.800" stroke-width="1"/><path d="M4 7.500h7" stroke-width="2"/></g></svg>
<span style="left:223.3px;top:429.34px;font-size:12px;color:#eff0f1;letter-spacing:-0.000px;">Show <u>v</u>ideo thumbnails</span>
<div style="left:201px;top:447.5px;width:18px;height:21px;background:#34393d;border:1px solid #44494d;border-radius:3px"></div>
<svg style="left:203px;top:451.0px;" width="14" height="14" viewBox="0 0 15 15"><path d="M0.500 7.500l3-3.500 3 3.500-3 3.500zM7 7.500l3.500-6 3.500 6-3.500 6z" fill="#eff0f1"/><path d="M0 7.500h15" stroke="#eff0f1" stroke-width="1"/></svg>
<span style="left:223.3px;top:452.34px;font-size:12px;color:#eff0f1;letter-spacing:0.020px;">S<u>h</u>ow audio thumbnails</span>
<svg style="left:203px;top:474.0px;" width="14" height="14" viewBox="0 0 15 15"><path d="M2.500 1v13" stroke="#eff0f1" stroke-width="1.400"/><path d="M2.500 1.500l11 3.800-11 3.800z" fill="#eff0f1"/></svg>
<span style="left:223.3px;top:475.34px;font-size:12px;color:#eff0f1;letter-spacing:-0.084px;">Show <u>m</u>arkers comments</span>
<div style="left:201px;top:493.5px;width:18px;height:21px;background:#34393d;border:1px solid #44494d;border-radius:3px"></div>
<svg style="left:203px;top:497.0px;" width="14" height="14" viewBox="0 0 15 15"><path d="M4.500 0.500v14" stroke="#eff0f1" stroke-width="1.400"/><rect x="7.500" y="6.200" width="6.500" height="2.600" fill="#eff0f1"/><rect x="0.800" y="6.800" width="1.800" height="1.400" fill="#eff0f1"/><rect x="5.800" y="6.800" width="1.200" height="1.400" fill="#eff0f1"/></svg>
<span style="left:223.3px;top:498.34px;font-size:12px;color:#eff0f1;letter-spacing:-0.581px;">S<u>n</u>ap</span>
<div style="left:203px;top:516px;width:326px;height:1px;background:#303438;"></div>
<svg style="left:203px;top:522.0px;" width="14" height="14" viewBox="0 0 15 15"><g fill="none" stroke="#eff0f1" stroke-width="1.200"><path d="M1.600 4.500v-2.900h2.900M7 1.600h1.500M13.400 6.500V8M13.400 10.500v2.900h-2.900M6.500 13.400H8M1.600 6.500V8"/><rect x="1.600" y="9.900" width="3.500" height="3.500"/><path d="M6.500 8.500l5.500-5.500M8.500 2.600h3.900v3.900"/></g></svg>
<span style="left:223.3px;top:523.34px;font-size:12px;color:#eff0f1;letter-spacing:0.041px;"><u>Z</u>oom In</span>
<span style="left:453.2px;top:523.34px;font-size:12px;color:#eff0f1;letter-spacing:0.137px;">Ctrl++</span>
<svg style="left:203px;top:545.0px;" width="14" height="14" viewBox="0 0 15 15"><g fill="none" stroke="#eff0f1" stroke-width="1.200"><path d="M1.600 8V1.600h11.800v11.800H7"/><rect x="1.600" y="9.900" width="3.500" height="3.500"/><path d="M11.500 3.500L7 8M7 4.500v3.600h3.600"/></g></svg>
<span style="left:223.3px;top:546.34px;font-size:12px;color:#eff0f1;letter-spacing:0.144px;">Zoom <u>O</u>ut</span>
<span style="left:453.2px;top:546.34px;font-size:12px;color:#eff0f1;letter-spacing:0.189px;">Ctrl+-</span>
<svg style="left:203px;top:568.0px;" width="14" height="14" viewBox="0 0 15 15"><g fill="none" stroke="#eff0f1" stroke-width="1.200"><path d="M1.600 4.500v-2.900h2.900M10.500 1.600h2.900v2.900M13.400 10.500v2.900h-2.900M4.500 13.400H1.600v-2.900M6.700 1.600h1.600M6.700 13.400h1.600M1.600 6.700v1.600M13.400 6.700v1.600"/><rect x="4.800" y="4.800" width="5.400" height="5.400"/></g></svg>
<span style="left:223.3px;top:569.34px;font-size:12px;color:#eff0f1;letter-spacing:0.053px;"><u>F</u>it zoom to project</span>
<div style="left:535px;top:120px;width:303px;height:116px;background:#232629;box-shadow:1px 1px 3px rgba(0,0,0,.5);border:1px solid #1c1f21"></div>
<svg style="left:541px;top:124.5px;" width="14" height="14" viewBox="0 0 15 15"><circle cx="7.800" cy="7.600" r="5.400" fill="none" stroke="#eff0f1" stroke-width="1.100"/><path d="M7.300 5.200v4.800l3.200-2.400z" fill="#eff0f1"/><path d="M6.400 4.800a3.200 3.200 0 0 0 0 5.600z" fill="#da4453"/></svg>
<span style="left:561.2px;top:125.84px;font-size:12px;color:#eff0f1;letter-spacing:-0.312px;"><u>S</u>tart Preview Render</span>
<span style="left:756.6px;top:125.84px;font-size:12px;color:#eff0f1;letter-spacing:-0.070px;">Shift+Return</span>
<svg style="left:541px;top:147.5px;" width="14" height="14" viewBox="0 0 15 15"><circle cx="7.800" cy="7.600" r="5.400" fill="none" stroke="#c9cbcc" stroke-width="1.100"/><path d="M7.300 5.200v4.800l3.200-2.400z" fill="#8d9194"/><path d="M6.400 4.800a3.200 3.200 0 0 0 0 5.600z" fill="#a0464f"/><path d="M2 13.400l11.600-11.600" stroke="#c9cbcc" stroke-width="1.100"/></svg>
<span style="left:561.2px;top:148.84px;font-size:12px;color:#eff0f1;letter-spacing:-0.294px;">Stop <u>P</u>review Render</span>
<svg style="left:541px;top:170.5px;" width="14" height="14" viewBox="0 0 15 15"><g fill="#c9cbcc"><rect x="1" y="4" width="13" height="1.200"/><rect x="1" y="4" width="1.200" height="7"/><rect x="12.800" y="4" width="1.200" height="7"/><rect x="4" y="2.500" width="1" height="3"/><rect x="7" y="2.500" width="1" height="3"/><rect x="10" y="2.500" width="1" height="3"/><rect x="3" y="7.500" width="2.500" height="2.500"/><rect x="6.300" y="7.500" width="2.500" height="2.500"/><rect x="9.600" y="7.500" width="2.500" height="2.500"/></g></svg>
<span style="left:561.2px;top:171.84px;font-size:12px;color:#eff0f1;letter-spacing:-0.141px;"><u>A</u>dd Preview Zone</span>
<svg style="left:541px;top:193.5px;" width="14" height="14" viewBox="0 0 15 15"><g fill="#c9cbcc"><rect x="1" y="4" width="13" height="1.200"/><rect x="1" y="4" width="1.200" height="7"/><rect x="12.800" y="4" width="1.200" height="7"/><rect x="4" y="2.500" width="1" height="3"/><rect x="7" y="2.500" width="1" height="3"/><rect x="10" y="2.500" width="1" height="3"/><rect x="3" y="7.500" width="2" height="2.500"/><rect x="10" y="7.500" width="2" height="2.500"/></g><path d="M6 7l3 3.500M9 7l-3 3.500" stroke="#da4453" stroke-width="1.200"/></svg>
<span style="left:561.2px;top:194.84px;font-size:12px;color:#eff0f1;letter-spacing:-0.246px;">Remove Preview Zone</span>
<svg style="left:541px;top:216.5px;" width="14" height="14" viewBox="0 0 15 15"><g fill="#c9cbcc"><rect x="1" y="4" width="13" height="1.200"/><rect x="4" y="2.500" width="1" height="3"/><rect x="7" y="2.500" width="1" height="3"/><rect x="10" y="2.500" width="1" height="3"/><rect x="2" y="6.500" width="3" height="1.500"/><rect x="10" y="6.500" width="3" height="1.500"/></g><path d="M5.500 7.500l4 4.500M9.500 7.500l-4 4.500" stroke="#da4453" stroke-width="1.300"/></svg>
<span style="left:561.2px;top:217.84px;font-size:12px;color:#eff0f1;letter-spacing:-0.195px;">Remove All Preview <u>Z</u>ones</span>
</div></body></html>
